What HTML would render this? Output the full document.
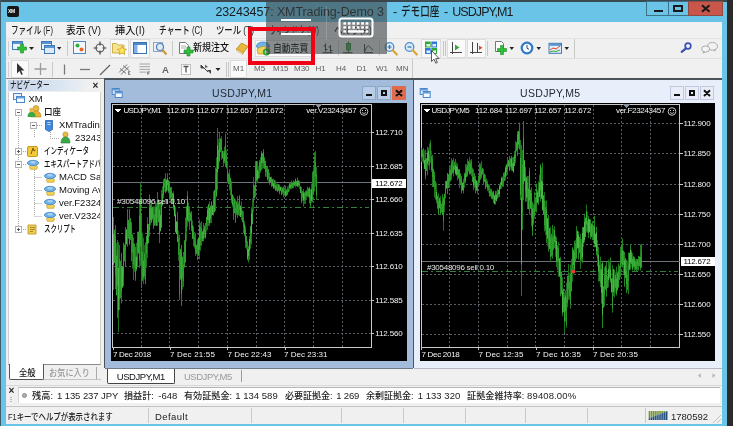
<!DOCTYPE html>
<html lang="ja">
<head>
<meta charset="utf-8">
<title>23243457: XMTrading-Demo 3 - デモ口座 - USDJPY,M1</title>
<style>
html,body{margin:0;padding:0;}
body{will-change:transform;width:733px;height:426px;overflow:hidden;position:relative;background:#69c4e7;font-family:"Liberation Sans","Noto Sans CJK JP",sans-serif;font-size:11px;color:#111;}
.a{position:absolute;}
.t{position:absolute;white-space:nowrap;line-height:1;}
[style*="scaleX"]{font-weight:500;}
#frame{left:0;top:0;width:733px;height:426px;background:#69c4e7;}
#client{left:6px;top:22px;width:716px;height:402px;background:#f0f0f0;}
.tt{top:6px;font-size:12.500px;color:#1b1b1b;}
.mi{top:25px;font-size:10.500px;color:#1a1a1a;}
.wb{top:1px;height:15px;border:1px solid #3d6f85;box-sizing:border-box;}
.nav{font-size:9.500px;color:#111;}
.cw{box-sizing:border-box;}
.pl{font-size:8px;color:#f4f4f4;}
.st{font-size:9.5px;color:#222;top:412px;}
.sep{position:absolute;width:1px;background:#c8c8c8;}

.pd{top:65px;font-size:8px;color:#5e5e5e;}
.tm{top:391px;font-size:9.5px;color:#222;}
</style>
</head>
<body>
<div class="a" id="frame"></div>
<div class="a" style="left:0;top:0;width:733px;height:1.500px;background:#3a4850"></div>
<div class="a" style="left:0;top:0;width:1px;height:426px;background:#3f5a68"></div>
<div class="a" style="left:727px;top:0;width:6px;height:426px;background:#2b2b2b"></div>
<div class="a" id="client"></div>
<!-- title bar -->
<div class="a" style="left:7px;top:6px;width:12px;height:11px;background:#151515;border-radius:2px"></div>
<div class="t" style="left:8px;top:9px;font-size:5px;font-weight:bold;color:#fff;letter-spacing:-0.3px">XM</div>
<div class="t tt" style="letter-spacing:-0.107px;left:215.400px;">23243457: XMTrading-Demo 3</div>
<div class="t tt" style="left:393px;">-</div>
<div class="t tt" style="transform:scaleX(0.7658);transform-origin:0 0;left:400.700px;">デモ口座</div>
<div class="t tt" style="left:444px;">-</div>
<div class="t tt" style="letter-spacing:-0.916px;left:452.200px;">USDJPY,M1</div>
<div class="a wb" style="left:646px;width:23px;"></div>
<div class="a" style="left:654px;top:9.500px;width:9px;height:2.500px;background:#1a1a1a"></div>
<div class="a wb" style="left:668px;width:21px;"></div>
<div class="a" style="left:673px;top:5px;width:10px;height:7px;border:2px solid #1a1a1a;border-top-width:2.500px;box-sizing:border-box"></div>
<div class="a wb" style="left:688px;width:35px;background:#c9564a;border-color:#8f4a42"></div>
<svg class="a" style="left:699px;top:3px" width="14" height="11" viewBox="0 0 14 11"><path d="M3 2.300l7.500 6.500M10.500 2.300l-7.500 6.500" stroke="#1a1a1a" stroke-width="2.100"/></svg>
<!-- menu bar -->
<div class="a" style="left:6px;top:22px;width:716px;height:16px;background:#f1f1f2"></div>
<div class="t mi" style="transform:scaleX(0.7201);transform-origin:0 0;left:11px">ファイル (F)</div>
<div class="t mi" style="transform:scaleX(0.9230);transform-origin:0 0;left:66px">表示 (V)</div>
<div class="t mi" style="transform:scaleX(0.9702);transform-origin:0 0;left:115px">挿入(I)</div>
<div class="t mi" style="transform:scaleX(0.7341);transform-origin:0 0;left:159px">チャート (C)</div>
<div class="t mi" style="transform:scaleX(0.7945);transform-origin:0 0;left:216px">ツール (T)</div>
<div class="t mi" style="transform:scaleX(0.6913);transform-origin:0 0;left:269px">ウィンドウ (W)</div>
<div class="t mi" style="transform:scaleX(0.8247);transform-origin:0 0;left:334px">ヘルプ(H)</div>
<!-- toolbars -->
<div class="a" style="left:6px;top:38px;width:716px;height:1px;background:#e3e3e3"></div>
<div class="a" style="left:6px;top:58px;width:716px;height:1px;background:#e0e0e0"></div>
<div class="a" style="left:6px;top:78px;width:716px;height:1px;background:#8a8a8a"></div>
<!-- pressed button backgrounds -->
<div class="a" style="left:110px;top:39px;width:19px;height:19px;background:#fafafa;border:1px solid #dcdcdc;box-sizing:border-box"></div>
<div class="a" style="left:130px;top:39px;width:20px;height:19px;background:#fafafa;border:1px solid #dcdcdc;box-sizing:border-box"></div>
<div class="a" style="left:421px;top:39px;width:20px;height:19px;background:#fafafa;border:1px solid #dcdcdc;box-sizing:border-box"></div>
<div class="a" style="left:447px;top:39px;width:19px;height:19px;background:#fafafa;border:1px solid #dcdcdc;box-sizing:border-box"></div>
<div class="a" style="left:467px;top:39px;width:19px;height:19px;background:#fafafa;border:1px solid #dcdcdc;box-sizing:border-box"></div>
<div class="a" style="left:11px;top:60px;width:18px;height:18px;background:#fafafa;border:1px solid #dcdcdc;box-sizing:border-box"></div>
<div class="a" style="left:230px;top:60px;width:17px;height:18px;background:#fafafa;border:1px solid #dcdcdc;box-sizing:border-box"></div>
<div class="a" style="left:254.500px;top:40px;width:58px;height:17px;background:#fbfbfb;border:1px solid #dcdcdc;box-sizing:border-box"></div>
<!-- separators -->
<div class="sep" style="left:67px;top:41px;height:15px"></div>
<div class="sep" style="left:172px;top:41px;height:15px"></div>
<div class="sep" style="left:443px;top:41px;height:15px"></div>
<div class="sep" style="left:445px;top:41px;height:15px"></div>
<div class="sep" style="left:487px;top:41px;height:15px"></div>
<div class="sep" style="left:574px;top:39px;height:19px"></div>
<div class="sep" style="left:8px;top:41px;height:15px;background:#d0d0d0"></div>
<div class="sep" style="left:8px;top:62px;height:15px;background:#d0d0d0"></div>
<div class="sep" style="left:52px;top:62px;height:15px"></div>
<div class="sep" style="left:226px;top:62px;height:15px"></div>
<div class="sep" style="left:228px;top:62px;height:15px"></div>
<div class="sep" style="left:412px;top:59px;height:19px"></div>
<!-- toolbar text -->
<div class="t" style="transform:scaleX(0.9000);transform-origin:0 0;left:193.400px;top:43px;font-size:10px;color:#111">新規注文</div>
<div class="t" style="transform:scaleX(0.8800);transform-origin:0 0;left:272.600px;top:43.500px;font-size:10px;color:#111">自動売買</div>
<div class="t" style="left:162px;top:64.500px;font-size:9.500px;font-weight:bold;color:#666">A</div>
<div class="t pd" style="left:233px">M1</div>
<div class="t pd" style="left:254px">M5</div>
<div class="t pd" style="left:273px">M15</div>
<div class="t pd" style="left:294px">M30</div>
<div class="t pd" style="left:315.500px">H1</div>
<div class="t pd" style="left:336px">H4</div>
<div class="t pd" style="left:356.500px">D1</div>
<div class="t pd" style="left:376px">W1</div>
<div class="t pd" style="left:396px">MN</div>
<svg class="a" style="left:0;top:0" width="733" height="426" viewBox="0 0 733 426">
<!-- new chart -->
<rect x="12.5" y="41.5" width="10" height="8" fill="#eaf2fb" stroke="#3f78b8"/>
<rect x="13" y="42" width="9" height="2" fill="#5a93d0"/>
<path d="M17.500 47h3v-3h3v3h3v3h-3v3h-3v-3h-3z" fill="#2fbf3a" stroke="#1d8a27" stroke-width="0.6"/>
<path d="M29 47h5l-2.5 3z" fill="#222"/>
<!-- profiles -->
<rect x="41.500" y="41.500" width="10" height="8" fill="#eaf2fb" stroke="#3f78b8"/>
<rect x="42" y="42" width="9" height="2" fill="#5a93d0"/>
<rect x="44.500" y="45.500" width="10" height="8" fill="#dfeaf8" stroke="#3f78b8"/>
<rect x="45" y="46" width="9" height="2" fill="#5a93d0"/>
<path d="M57 47h4.400l-2.200 2.800z" fill="#222"/>
<!-- market watch -->
<rect x="73.500" y="41.500" width="12" height="12" fill="#f4f8fd" stroke="#4a86c8"/>
<circle cx="77.500" cy="45.500" r="2" fill="#2fae3a"/>
<circle cx="81.500" cy="49.500" r="2" fill="#e8662a"/>
<!-- data window crosshair -->
<circle cx="100" cy="48" r="4" fill="none" stroke="#555" stroke-width="1.200"/>
<path d="M100 41.500v4M100 50.500v4M93.500 48h4M102.500 48h4" stroke="#444" stroke-width="1.200"/>
<!-- navigator folder star -->
<path d="M112.500 43.500h4l1.500 1.500h6v8h-11.500z" fill="#f6e290" stroke="#cdb04a"/>
<path d="M122 46l1.400 2.900 3.100.4-2.300 2.100.6 3.100-2.800-1.500-2.800 1.500.6-3.100-2.300-2.100 3.100-.4z" fill="#ffe45c" stroke="#c59a16" stroke-width="0.700"/>
<!-- terminal -->
<rect x="133.500" y="42.500" width="13" height="11" fill="#fff" stroke="#3b72b5"/>
<rect x="134" y="43" width="12" height="2" fill="#4f88c9"/>
<rect x="134" y="45" width="3.500" height="8" fill="#7fb0e6"/>
<!-- strategy tester -->
<rect x="153.500" y="42.500" width="9" height="9" fill="#e8f0fa" stroke="#8aa6c8"/>
<circle cx="160" cy="47" r="3.500" fill="#dbe9f8" stroke="#5b7fae" stroke-width="1.200"/>
<path d="M162.500 50l4 4.500" stroke="#c9962a" stroke-width="2"/>
<!-- new order -->
<path d="M179.500 42.500h6l3 3v8h-9z" fill="#fff" stroke="#777"/>
<path d="M181 46h5M181 48h5" stroke="#999" stroke-width="0.800"/>
<path d="M184 50h3v-3h3v3h3v3h-3v3h-3v-3h-3z" fill="#2fbf3a" stroke="#1d8a27" stroke-width="0.600"/>
<!-- metaeditor book -->
<path d="M236.500 49l5-6 6.500 3.500-5 6.500z" fill="#e9b83a" stroke="#b58516" stroke-width="0.800"/>
<path d="M236.500 49l6.500 4v1.500l-6.500-4z" fill="#fff3c4" stroke="#b58516" stroke-width="0.500"/>
<!-- autotrading -->
<ellipse cx="263" cy="46" rx="6.500" ry="4" fill="#6fb2e8" stroke="#3a7dbd" stroke-width="0.800"/>
<path d="M257 49q6-5 13 0l-1 5h-11z" fill="#f2d257" stroke="#c49e28" stroke-width="0.800"/>
<circle cx="266.500" cy="52" r="3.300" fill="#35b53f" stroke="#1f8a2a" stroke-width="0.600"/>
<path d="M265.500 50.300l2.600 1.700-2.600 1.700z" fill="#fff"/>
<!-- bar chart / candle / line icons (under overlay) -->
<path d="M325.500 43.500v8M325.500 46h-2M325.500 49.500h2M330.500 45v7M330.500 47h-2M330.500 50.500h2M322.500 52.700h10" stroke="#3a3a3a" stroke-width="1"/>
<path d="M348.500 41.500v11" stroke="#2a7a2a" stroke-width="1"/><rect x="346.500" y="43.500" width="4" height="6.500" fill="#3fb54a" stroke="#1f7a2a" stroke-width="0.800"/>
<path d="M343 52.700h9.500" stroke="#3a3a3a"/>
<path d="M364.500 44v8.700h8.500" stroke="#3a3a3a" fill="none"/><path d="M365 51q2.500-7 4.500-4.500t3.500 3.500" stroke="#3a3a3a" fill="none" stroke-width="0.900"/>
<path d="M338.500 41v15M379.500 41v15" stroke="#d2d2d2" stroke-width="1"/>
<!-- zoom in/out -->
<circle cx="389.500" cy="47" r="4.300" fill="#d8ebfb" stroke="#4a8fd0" stroke-width="1.300"/>
<path d="M387.500 47h4M389.500 45v4" stroke="#2f72b8" stroke-width="1.200"/>
<path d="M392.800 50.300l4 4.200" stroke="#d9a62e" stroke-width="2.200" stroke-linecap="round"/>
<circle cx="409.500" cy="47" r="4.300" fill="#d8ebfb" stroke="#4a8fd0" stroke-width="1.300"/>
<path d="M407.500 47h4" stroke="#2f72b8" stroke-width="1.200"/>
<path d="M412.800 50.300l4 4.200" stroke="#d9a62e" stroke-width="2.200" stroke-linecap="round"/>
<!-- tile -->
<rect x="425" y="41.500" width="5.700" height="6" fill="#2fa83a"/><rect x="426.500" y="44" width="3.500" height="2.500" fill="#eaf7ec"/>
<rect x="431.300" y="41.500" width="5.700" height="6" fill="#2f78e0"/><rect x="432.500" y="44" width="3.500" height="2.500" fill="#e6f0fc"/>
<rect x="425" y="48" width="5.700" height="6" fill="#2f78e0"/><rect x="426.500" y="50.500" width="3.500" height="2.500" fill="#e6f0fc"/>
<rect x="431.300" y="48" width="5.700" height="6" fill="#2fa83a"/><rect x="433" y="50.500" width="3" height="2.500" fill="#eaf7ec"/>
<!-- mouse cursor -->
<path d="M431.500 50.500v11l2.500-2.300 1.800 4 1.600-.7-1.800-3.900h3.400z" fill="#fff" stroke="#333" stroke-width="0.800"/>
<!-- auto scroll -->
<path d="M452.500 42v12M450 52.500h12" stroke="#444" stroke-width="1"/>
<path d="M455 44.500l4.500 3-4.500 3z" fill="#35a83f"/>
<!-- chart shift -->
<path d="M472.500 42v12M470 52.500h12M477.500 43v9" stroke="#444" stroke-width="1"/>
<path d="M479 45.500l3.500 2.200-3.500 2.200z" fill="#d8452e"/>
<!-- indicators -->
<path d="M495.500 41.500h6l2 2v8h-8z" fill="#fff" stroke="#777"/>
<path d="M497.500 48.500h3v-3h3v3h3v3h-3v3h-3v-3h-3z" fill="#2fbf3a" stroke="#1d8a27" stroke-width="0.600"/>
<path d="M509.500 47h4.500l-2.250 3z" fill="#222"/>
<!-- clock -->
<circle cx="527" cy="48" r="5.300" fill="#f4f9ff" stroke="#2f78c8" stroke-width="2.200"/>
<path d="M527 45v3.300l2 1" stroke="#2a4a78" fill="none" stroke-width="1"/>
<path d="M536.500 47h4.500l-2.250 3z" fill="#222"/>
<!-- templates -->
<rect x="549" y="43.300" width="12.500" height="10" fill="#e3eefb" stroke="#3f78b8"/>
<rect x="549.500" y="43.800" width="11.500" height="2" fill="#5a93d0"/>
<path d="M550 50l3-2 3 1 4-3" stroke="#d8452e" fill="none" stroke-width="1"/>
<path d="M550 52l3-1 3 .5 4-1.500" stroke="#35a83f" fill="none" stroke-width="1"/>
<path d="M564.500 47h4.500l-2.250 3z" fill="#222"/>
<!-- search, chat -->
<circle cx="688" cy="46" r="2.800" fill="#f4f6ff" stroke="#3a50b0" stroke-width="1.700"/>
<path d="M686 48.300l-4.300 3.500" stroke="#3a50b0" stroke-width="2.200" stroke-linecap="round"/>
<ellipse cx="712.500" cy="46.300" rx="5" ry="3.900" fill="#f1f1f1" stroke="#a2a2a2" stroke-width="0.900"/>
<path d="M713.500 49.800l1.800 2 .2-2.300z" fill="#a2a2a2"/>
<ellipse cx="705.600" cy="49" rx="4" ry="3.100" fill="#f4f4f4" stroke="#a2a2a2" stroke-width="0.900"/>
<path d="M703.500 51.500l-.8 2.200 2.600-1.500z" fill="#a2a2a2"/>
<!-- toolbar 2 -->
<path d="M17 63v10.500l2.600-2.400 1.700 3.800 1.500-.7-1.700-3.700h3.400z" fill="#333"/>
<path d="M40.500 63v12M34.500 69h12" stroke="#9a9a9a" stroke-width="1.300"/>
<path d="M64.500 64.500v10" stroke="#777" stroke-width="1.300"/>
<path d="M80 69.500h10" stroke="#777" stroke-width="1.300"/>
<path d="M100 75l10-10" stroke="#666" stroke-width="1.200"/>
<path d="M119 72.500l8-8M121 74.500l8-8M120 68.500l6 5M123 65.500l6 5" stroke="#666" stroke-width="0.900"/>
<path d="M128.500 71.500v3h1.800M128.500 73h1.400M128.500 71.500h1.800" stroke="#444" stroke-width="0.600" fill="none"/>
<path d="M139.500 64h10.500M139.500 66.700h10.500M139.500 69.400h10.500M139.500 72.100h7" stroke="#9a9a9a" stroke-width="0.900"/>
<path d="M147.800 71.800v3M147.800 71.800h2M147.800 73.200h1.500" stroke="#444" stroke-width="0.700" fill="none"/>
<rect x="181.500" y="64.500" width="9" height="10" fill="#fdfdfd" stroke="#888" stroke-dasharray="1 1"/>
<path d="M183.500 66.500h5M186 66.500v6" stroke="#555" stroke-width="1.300"/>
<path d="M201 65l3 3-3 0zM204 68l4 4" stroke="#444" fill="#444" stroke-width="1"/>
<path d="M207 70l4 0 0 4z" fill="#444"/><path d="M205 64.500l3 2.500-3 1z" fill="#666"/>
<path d="M215.500 68h5l-2.500 3z" fill="#222"/>
</svg>
<!-- navigator -->
<div class="a" style="left:8px;top:80px;width:81px;height:11px;background:linear-gradient(90deg,#c3d3e8,#dde7f3 70%,#f0f0f0)"></div>
<div class="t" style="transform:scaleX(0.7313);transform-origin:0 0;left:10px;top:81px;font-size:9px;color:#222">ナビゲーター</div>
<div class="t" style="left:92.500px;top:80.500px;font-size:10px;font-weight:bold;color:#222">×</div>
<div class="a" style="left:8px;top:92px;width:93px;height:273px;background:#fff;border:1px solid #d0d0d0;border-top:0;border-bottom-color:#8c8c8c;box-sizing:border-box;overflow:hidden">
  <div class="t nav" style="left:19.5px;top:2px">XM</div>
  <div class="t nav" style="transform:scaleX(0.8940);transform-origin:0 0;left:35px;top:15px">口座</div>
  <div class="t nav" style="left:50px;top:28px">XMTrading-Demo 3</div>
  <div class="t nav" style="left:66px;top:41px">23243457</div>
  <div class="t nav" style="transform:scaleX(0.6834);transform-origin:0 0;left:35px;top:54px">インディケータ</div>
  <div class="t nav" style="transform:scaleX(0.6717);transform-origin:0 0;left:35px;top:67px">エキスパートアドバイザ</div>
  <div class="t nav" style="left:50px;top:80px">MACD Sample</div>
  <div class="t nav" style="left:50px;top:93px">Moving Average</div>
  <div class="t nav" style="left:50px;top:106px">ver.F23243457</div>
  <div class="t nav" style="left:50px;top:119px">ver.V23243457</div>
  <div class="t nav" style="transform:scaleX(0.6735);transform-origin:0 0;left:35px;top:132px">スクリプト</div>
</div>
<svg class="a" style="left:0;top:0" width="110" height="400" viewBox="0 0 110 400">
<!-- tree lines -->
<path d="M18.500 115v114M34.500 128v10M21 151.500h5M21 164.500h5M21 229.500h5M34.500 168v48M34.500 177.500h8M34.500 190.500h8M34.500 203.500h8M34.500 216.500h8M37 125.500h6M50.500 130v8.500h9" stroke="#a8a8a8" stroke-width="1" stroke-dasharray="1 1" fill="none"/>
<g fill="#fff" stroke="#b2b2b2"><rect x="15.500" y="109.500" width="6" height="6"/><rect x="30.500" y="122.500" width="6" height="6"/><rect x="15.500" y="148.500" width="6" height="6"/><rect x="15.500" y="161.500" width="6" height="6"/><rect x="15.500" y="226.500" width="6" height="6"/></g>
<path d="M17 112.500h3M32 125.500h3M17 151.500h3M18.500 150v3M17 164.500h3M17 229.500h3M18.500 228v3" stroke="#5a5a5a"/>
<!-- XM icon -->
<rect x="13.500" y="93.500" width="8" height="6" fill="#eaf2fb" stroke="#4a86c8"/><rect x="16.500" y="96.500" width="8" height="6" fill="#f6faff" stroke="#4a86c8"/><rect x="17" y="97" width="7" height="1.500" fill="#6aa0dc"/>
<!-- accounts icon -->
<circle cx="36" cy="108.500" r="3" fill="#e8b84a" stroke="#b58516" stroke-width="0.600"/><path d="M31 117q0-6 5-6t5 6z" fill="#e8b030" stroke="#b58516" stroke-width="0.600"/>
<circle cx="31.500" cy="110" r="2.300" fill="#e8b84a"/><path d="M27.500 117q0-5 4-5t4 5z" fill="#3aa845"/>
<!-- server icon -->
<path d="M45.500 120.500h7v9l-3.500 2-3.500-2z" fill="#3f8ae0" stroke="#2a62b0" stroke-width="0.800"/><path d="M47.500 122.500h3M47.500 124.500h3" stroke="#d8e8fb" stroke-width="0.800"/>
<!-- account person -->
<circle cx="65.500" cy="134.500" r="2.600" fill="#e8b84a" stroke="#b58516" stroke-width="0.600"/><path d="M61 143q0-6 4.500-6t4.500 6z" fill="#3aa845" stroke="#1f7a2a" stroke-width="0.600"/>
<!-- indicators icon -->
<rect x="27.500" y="146.500" width="10" height="10" rx="1.500" fill="#f3c93a" stroke="#c49a1a"/><path d="M31 154l2-6 1 3 1.500-1" stroke="#6a4a00" fill="none" stroke-width="0.900"/>
<!-- experts icons -->
<g id="ea"><path d="M29.500 166.500q3.500-3.500 8 0l-.8 2.800h-6.400z" fill="#f2d257" stroke="#c49e28" stroke-width="0.700"/><ellipse cx="33" cy="163" rx="5.600" ry="2.700" fill="#6fb2e8" stroke="#3a7dbd" stroke-width="0.700"/><ellipse cx="33" cy="162.300" rx="2.600" ry="1.200" fill="#a8d2f4"/></g>
<use href="#ea" x="17" y="13"/><use href="#ea" x="17" y="26"/><use href="#ea" x="17" y="39"/><use href="#ea" x="17" y="52"/>
<!-- scripts icon -->
<path d="M28 225h8v9h-8z" fill="#f0cf55" stroke="#b8901f" stroke-width="0.800"/><path d="M30 227.500h5M30 229.500h5M30 231.500h3" stroke="#8a6a10" stroke-width="0.700"/>
</svg>
<!-- nav tabs -->
<div class="a" style="left:43px;top:379px;width:58px;height:1px;background:#c4c4c4"></div>
<div class="a" style="left:9px;top:364px;width:34.500px;height:16px;background:#fff;border:1px solid #555;border-top:0;box-sizing:border-box;border-radius:0 0 2px 2px"></div>
<div class="t" style="transform:scaleX(0.9159);transform-origin:0 0;left:19px;top:368.500px;font-size:9px;color:#111;">全般</div>
<div class="t" style="transform:scaleX(0.9108);transform-origin:0 0;left:48.500px;top:368.500px;font-size:9px;color:#999;">お気に入り</div>
<div class="sep" style="left:96px;top:367px;height:12px;background:#aaa"></div>
<!-- MDI workspace -->
<div class="a" style="left:104px;top:78px;width:618px;height:290px;background:#4a525a"></div>
<!-- window 1 (active) -->
<div class="a" style="left:105px;top:80px;width:308px;height:288px;background:#a3bcdc"></div>
<div class="a" style="left:110.500px;top:103px;width:296px;height:258px;background:#000"></div>
<div class="t" style="letter-spacing:0.325px;left:212px;top:88.400px;font-size:10.500px;color:#1e2630">USDJPY,M1</div>
<div class="a" style="left:362px;top:86px;width:14px;height:14px;background:#b9cde6;border:1px solid #8da6c6;box-sizing:border-box"></div>
<div class="a" style="left:366px;top:94px;width:6px;height:2px;background:#111"></div>
<div class="a" style="left:377px;top:86px;width:14px;height:14px;background:#b9cde6;border:1px solid #8da6c6;box-sizing:border-box"></div>
<div class="a" style="left:381px;top:90px;width:6px;height:6px;border:2px solid #111;border-top-width:2px;box-sizing:border-box"></div>
<div class="a" style="left:392px;top:86px;width:14px;height:14px;background:#e06a4c;box-sizing:border-box"></div>

<!-- window 2 (inactive) -->
<div class="a" style="left:414px;top:80px;width:308px;height:288px;background:#e9eefb"></div>
<div class="a" style="left:419.500px;top:103px;width:295.300px;height:258px;background:#000"></div>
<div class="t" style="letter-spacing:0.325px;left:520px;top:88.400px;font-size:10.500px;color:#1e2630">USDJPY,M5</div>
<div class="a" style="left:670px;top:86px;width:14px;height:14px;background:#e9edf9;border:1px solid #c3c9dd;box-sizing:border-box"></div>
<div class="a" style="left:674px;top:94px;width:6px;height:2px;background:#111"></div>
<div class="a" style="left:685px;top:86px;width:14px;height:14px;background:#e9edf9;border:1px solid #c3c9dd;box-sizing:border-box"></div>
<div class="a" style="left:689px;top:90px;width:6px;height:6px;border:2px solid #111;box-sizing:border-box"></div>
<div class="a" style="left:700px;top:86px;width:14px;height:14px;background:#e9edf9;border:1px solid #c3c9dd;box-sizing:border-box"></div>

<!-- window icons -->
<svg class="a" style="left:0;top:0" width="733" height="120" viewBox="0 0 733 120">
<g id="wi" transform="translate(-1.300,0)"><rect x="113.500" y="88.500" width="7" height="6" fill="#dfeaf8" stroke="#4a86c8"/><rect x="114" y="89" width="6" height="1.500" fill="#5f98d8"/><rect x="116.500" y="91.500" width="7" height="6" fill="#f2f7fd" stroke="#4a86c8"/><rect x="117" y="92" width="6" height="1.500" fill="#5f98d8"/></g>
<use href="#wi" x="308" y="0"/>
<path d="M396 90.300l6 5.700M402 90.300l-6 5.700M704 90.300l6 5.700M710 90.300l-6 5.700" stroke="#111" stroke-width="2"/>
</svg>
<svg class="a" style="left:0;top:0" width="733" height="426" viewBox="0 0 733 426" shape-rendering="crispEdges">
<defs><filter id="bl" x="-5%" y="-5%" width="110%" height="110%"><feGaussianBlur stdDeviation="0.55"/></filter></defs>
<path d="M141.5 105V347M169.5 105V347M198.5 105V347M227.5 105V347M256.5 105V347M284.5 105V347M313.5 105V347M342.5 105V347M113 132.5H371M113 166.5H371M113 199.5H371M113 233.5H371M113 266.5H371M113 300.5H371M113 333.5H371" stroke="#565d66" stroke-width="1" stroke-dasharray="2 2" fill="none"/>
<path d="M112.500 104v243H372M112 104.500h259.500V347" stroke="#c8c8c8" fill="none"/>
<path d="M113 182.500h258" stroke="#6c7279"/>
<path d="M113 207.500h256" stroke="#33803d" stroke-dasharray="6 3 2 3"/>
<g filter="url(#bl)" shape-rendering="auto">
<rect x="113" y="217.0" width="1" height="73.0" fill="#1f7d1f"/>
<rect x="115" y="225.0" width="1" height="64.0" fill="#1f7d1f"/>
<rect x="116" y="242.8" width="1" height="44.7" fill="#1a6a1a"/>
<rect x="117" y="240.0" width="1" height="78.0" fill="#1f7d1f"/>
<rect x="118" y="242.0" width="1" height="90.0" fill="#1b721b"/>
<rect x="119" y="245.0" width="1" height="65.0" fill="#1f7d1f"/>
<rect x="121" y="252.9" width="1" height="50.5" fill="#238723"/>
<rect x="123" y="242.5" width="1" height="43.5" fill="#238723"/>
<rect x="125" y="227.2" width="1" height="39.1" fill="#238723"/>
<rect x="127" y="209.2" width="1" height="37.4" fill="#238723"/>
<rect x="129" y="209.1" width="1" height="35.7" fill="#238723"/>
<rect x="131" y="222.2" width="1" height="39.1" fill="#238723"/>
<rect x="132" y="233.8" width="1" height="34.9" fill="#1a6a1a"/>
<rect x="133" y="237.4" width="1" height="42.6" fill="#1f7d1f"/>
<rect x="134" y="249.2" width="1" height="22.6" fill="#175f17"/>
<rect x="135" y="246.9" width="1" height="33.9" fill="#238723"/>
<rect x="136" y="242.8" width="1" height="28.4" fill="#1a6a1a"/>
<rect x="137" y="232.0" width="1" height="34.8" fill="#238723"/>
<rect x="139" y="200.0" width="1" height="68.0" fill="#1b721b"/>
<rect x="140" y="183.0" width="1" height="83.0" fill="#1b721b"/>
<rect x="141" y="215.0" width="1" height="73.0" fill="#238723"/>
<rect x="142" y="232.7" width="1" height="41.4" fill="#1a6a1a"/>
<rect x="143" y="237.7" width="1" height="46.1" fill="#1b721b"/>
<rect x="144" y="245.1" width="1" height="34.3" fill="#175f17"/>
<rect x="145" y="242.4" width="1" height="41.8" fill="#238723"/>
<rect x="146" y="235.5" width="1" height="32.2" fill="#1d741d"/>
<rect x="147" y="217.3" width="1" height="40.9" fill="#1b721b"/>
<rect x="149" y="194.4" width="1" height="41.8" fill="#238723"/>
<rect x="150" y="203.6" width="1" height="21.6" fill="#1d741d"/>
<rect x="151" y="201.2" width="1" height="21.8" fill="#238723"/>
<rect x="152" y="208.8" width="1" height="11.6" fill="#175f17"/>
<rect x="153" y="206.3" width="1" height="22.6" fill="#238723"/>
<rect x="154" y="206.4" width="1" height="19.2" fill="#1a6a1a"/>
<rect x="155" y="201.4" width="1" height="24.4" fill="#1b721b"/>
<rect x="156" y="202.7" width="1" height="16.9" fill="#1a6a1a"/>
<rect x="157" y="191.9" width="1" height="33.9" fill="#1f7d1f"/>
<rect x="159" y="202.3" width="1" height="40.9" fill="#1f7d1f"/>
<rect x="160" y="203.7" width="1" height="26.2" fill="#1d741d"/>
<rect x="161" y="190.1" width="1" height="36.5" fill="#1b721b"/>
<rect x="162" y="186.3" width="1" height="19.3" fill="#1d741d"/>
<rect x="163" y="179.1" width="1" height="19.1" fill="#1f7d1f"/>
<rect x="164" y="179.5" width="1" height="12.3" fill="#175f17"/>
<rect x="165" y="173.2" width="1" height="20.0" fill="#1f7d1f"/>
<rect x="167" y="173.0" width="1" height="17.4" fill="#1b721b"/>
<rect x="168" y="179.8" width="1" height="13.5" fill="#1a6a1a"/>
<rect x="169" y="181.0" width="1" height="17.4" fill="#238723"/>
<rect x="170" y="187.0" width="1" height="11.4" fill="#1a6a1a"/>
<rect x="171" y="186.9" width="1" height="16.5" fill="#238723"/>
<rect x="173" y="191.1" width="1" height="19.1" fill="#1b721b"/>
<rect x="175" y="206.5" width="1" height="26.1" fill="#1b721b"/>
<rect x="177" y="211.8" width="1" height="30.4" fill="#1f7d1f"/>
<rect x="178" y="230.7" width="1" height="30.1" fill="#175f17"/>
<rect x="179" y="235.0" width="1" height="65.0" fill="#1f7d1f"/>
<rect x="181" y="245.0" width="1" height="61.0" fill="#238723"/>
<rect x="182" y="257.8" width="1" height="31.8" fill="#1a6a1a"/>
<rect x="183" y="252.0" width="1" height="34.8" fill="#1f7d1f"/>
<rect x="184" y="240.0" width="1" height="27.4" fill="#1d741d"/>
<rect x="185" y="217.5" width="1" height="43.5" fill="#1f7d1f"/>
<rect x="186" y="214.8" width="1" height="26.5" fill="#1a6a1a"/>
<rect x="187" y="191.1" width="1" height="35.7" fill="#1b721b"/>
<rect x="188" y="202.3" width="1" height="19.9" fill="#1a6a1a"/>
<rect x="189" y="206.3" width="1" height="23.5" fill="#1f7d1f"/>
<rect x="191" y="211.2" width="1" height="20.0" fill="#238723"/>
<rect x="192" y="220.4" width="1" height="15.4" fill="#1a6a1a"/>
<rect x="193" y="226.2" width="1" height="20.0" fill="#1f7d1f"/>
<rect x="194" y="232.0" width="1" height="16.4" fill="#1d741d"/>
<rect x="195" y="233.3" width="1" height="22.6" fill="#238723"/>
<rect x="197" y="239.2" width="1" height="20.9" fill="#238723"/>
<rect x="198" y="237.2" width="1" height="15.0" fill="#175f17"/>
<rect x="199" y="219.3" width="1" height="40.0" fill="#1b721b"/>
<rect x="200" y="222.6" width="1" height="28.2" fill="#1a6a1a"/>
<rect x="201" y="221.4" width="1" height="24.4" fill="#1f7d1f"/>
<rect x="203" y="223.1" width="1" height="18.3" fill="#1f7d1f"/>
<rect x="204" y="225.4" width="1" height="12.9" fill="#1d741d"/>
<rect x="205" y="222.9" width="1" height="15.7" fill="#238723"/>
<rect x="206" y="217.9" width="1" height="13.6" fill="#1a6a1a"/>
<rect x="207" y="206.3" width="1" height="23.5" fill="#1f7d1f"/>
<rect x="208" y="206.9" width="1" height="19.0" fill="#1d741d"/>
<rect x="209" y="201.4" width="1" height="24.4" fill="#1b721b"/>
<rect x="210" y="207.9" width="1" height="15.2" fill="#1d741d"/>
<rect x="211" y="201.2" width="1" height="21.8" fill="#1b721b"/>
<rect x="213" y="191.4" width="1" height="24.4" fill="#1b721b"/>
<rect x="215" y="167.5" width="1" height="43.5" fill="#1f7d1f"/>
<rect x="216" y="157.2" width="1" height="39.2" fill="#1a6a1a"/>
<rect x="217" y="128.0" width="1" height="62.0" fill="#1f7d1f"/>
<rect x="218" y="139.0" width="1" height="26.5" fill="#175f17"/>
<rect x="219" y="131.8" width="1" height="30.4" fill="#1f7d1f"/>
<rect x="221" y="136.3" width="1" height="23.5" fill="#1b721b"/>
<rect x="223" y="150.9" width="1" height="15.7" fill="#1b721b"/>
<rect x="224" y="146.5" width="1" height="17.0" fill="#1d741d"/>
<rect x="225" y="133.9" width="1" height="33.1" fill="#238723"/>
<rect x="226" y="149.9" width="1" height="18.8" fill="#1a6a1a"/>
<rect x="227" y="161.2" width="1" height="21.8" fill="#1f7d1f"/>
<rect x="229" y="169.2" width="1" height="20.9" fill="#1f7d1f"/>
<rect x="230" y="181.1" width="1" height="14.3" fill="#1d741d"/>
<rect x="231" y="181.2" width="1" height="21.8" fill="#1f7d1f"/>
<rect x="232" y="195.0" width="1" height="12.3" fill="#175f17"/>
<rect x="233" y="196.3" width="1" height="23.5" fill="#238723"/>
<rect x="235" y="199.3" width="1" height="23.5" fill="#1f7d1f"/>
<rect x="236" y="201.1" width="1" height="14.2" fill="#1a6a1a"/>
<rect x="237" y="196.2" width="1" height="21.8" fill="#1f7d1f"/>
<rect x="238" y="201.5" width="1" height="13.8" fill="#175f17"/>
<rect x="239" y="195.2" width="1" height="20.9" fill="#238723"/>
<rect x="241" y="201.1" width="1" height="19.1" fill="#1b721b"/>
<rect x="243" y="211.2" width="1" height="21.8" fill="#1b721b"/>
<rect x="244" y="221.3" width="1" height="15.0" fill="#1d741d"/>
<rect x="245" y="226.2" width="1" height="21.8" fill="#1b721b"/>
<rect x="246" y="235.8" width="1" height="13.6" fill="#175f17"/>
<rect x="247" y="241.1" width="1" height="19.1" fill="#238723"/>
<rect x="248" y="245.9" width="1" height="16.5" fill="#1f7d1f"/>
<rect x="249" y="236.3" width="1" height="23.5" fill="#1f7d1f"/>
<rect x="250" y="229.6" width="1" height="19.2" fill="#1d741d"/>
<rect x="251" y="207.2" width="1" height="37.4" fill="#1f7d1f"/>
<rect x="252" y="198.3" width="1" height="23.8" fill="#1a6a1a"/>
<rect x="253" y="177.0" width="1" height="34.8" fill="#1b721b"/>
<rect x="255" y="161.1" width="1" height="35.7" fill="#238723"/>
<rect x="256" y="168.9" width="1" height="14.8" fill="#175f17"/>
<rect x="257" y="161.2" width="1" height="21.8" fill="#1f7d1f"/>
<rect x="258" y="165.6" width="1" height="11.4" fill="#175f17"/>
<rect x="259" y="160.1" width="1" height="18.3" fill="#1f7d1f"/>
<rect x="260" y="157.2" width="1" height="15.6" fill="#1d741d"/>
<rect x="261" y="151.1" width="1" height="19.1" fill="#238723"/>
<rect x="262" y="154.7" width="1" height="14.1" fill="#1d741d"/>
<rect x="263" y="149.1" width="1" height="19.1" fill="#238723"/>
<rect x="264" y="157.0" width="1" height="11.2" fill="#1d741d"/>
<rect x="265" y="160.9" width="1" height="15.7" fill="#238723"/>
<rect x="266" y="165.7" width="1" height="11.2" fill="#175f17"/>
<rect x="267" y="165.8" width="1" height="14.8" fill="#238723"/>
<rect x="268" y="172.7" width="1" height="9.6" fill="#175f17"/>
<rect x="269" y="172.7" width="1" height="12.2" fill="#1f7d1f"/>
<rect x="271" y="176.6" width="1" height="10.4" fill="#1f7d1f"/>
<rect x="273" y="178.6" width="1" height="10.4" fill="#1f7d1f"/>
<rect x="274" y="180.3" width="1" height="8.5" fill="#1d741d"/>
<rect x="275" y="180.6" width="1" height="10.4" fill="#1f7d1f"/>
<rect x="276" y="183.6" width="1" height="7.1" fill="#1d741d"/>
<rect x="277" y="183.5" width="1" height="8.7" fill="#238723"/>
<rect x="278" y="185.4" width="1" height="5.7" fill="#1d741d"/>
<rect x="279" y="184.6" width="1" height="9.6" fill="#238723"/>
<rect x="281" y="186.5" width="1" height="8.7" fill="#1f7d1f"/>
<rect x="282" y="188.9" width="1" height="5.3" fill="#1a6a1a"/>
<rect x="283" y="186.6" width="1" height="10.4" fill="#1f7d1f"/>
<rect x="284" y="187.4" width="1" height="6.9" fill="#1d741d"/>
<rect x="285" y="185.7" width="1" height="11.3" fill="#238723"/>
<rect x="287" y="186.5" width="1" height="8.7" fill="#1f7d1f"/>
<rect x="288" y="185.5" width="1" height="6.6" fill="#175f17"/>
<rect x="289" y="182.5" width="1" height="8.7" fill="#1b721b"/>
<rect x="290" y="182.6" width="1" height="6.6" fill="#1d741d"/>
<rect x="291" y="180.5" width="1" height="8.7" fill="#1f7d1f"/>
<rect x="292" y="182.0" width="1" height="6.3" fill="#175f17"/>
<rect x="293" y="180.4" width="1" height="7.8" fill="#1f7d1f"/>
<rect x="295" y="178.5" width="1" height="8.7" fill="#238723"/>
<rect x="297" y="177.6" width="1" height="9.6" fill="#238723"/>
<rect x="298" y="180.1" width="1" height="6.9" fill="#1a6a1a"/>
<rect x="299" y="180.5" width="1" height="8.7" fill="#1b721b"/>
<rect x="301" y="186.9" width="1" height="16.5" fill="#1f7d1f"/>
<rect x="302" y="192.1" width="1" height="9.1" fill="#175f17"/>
<rect x="303" y="189.0" width="1" height="17.4" fill="#1f7d1f"/>
<rect x="304" y="192.5" width="1" height="11.6" fill="#1d741d"/>
<rect x="305" y="190.8" width="1" height="13.1" fill="#1b721b"/>
<rect x="306" y="189.7" width="1" height="9.9" fill="#175f17"/>
<rect x="307" y="186.6" width="1" height="10.4" fill="#238723"/>
<rect x="308" y="188.2" width="1" height="9.3" fill="#1d741d"/>
<rect x="309" y="186.9" width="1" height="16.5" fill="#238723"/>
<rect x="310" y="189.1" width="1" height="19.1" fill="#1f7d1f"/>
<rect x="311" y="183.5" width="1" height="19.4" fill="#1a6a1a"/>
<rect x="312" y="171.8" width="1" height="30.4" fill="#238723"/>
<rect x="313" y="167.2" width="1" height="21.2" fill="#175f17"/>
<rect x="314" y="152.2" width="1" height="39.2" fill="#1f7d1f"/>
<rect x="315" y="151.1" width="1" height="35.7" fill="#1f7d1f"/>
<rect x="316" y="166.9" width="1" height="33.1" fill="#1b721b"/>
<rect x="113" y="234.1" width="1" height="30.6" fill="#48b848"/>
<rect x="114" y="229.7" width="1" height="33.3" fill="#2f9f2f"/>
<rect x="115" y="235.8" width="1" height="39.7" fill="#2f9f2f"/>
<rect x="116" y="255.6" width="1" height="39.7" fill="#38ab38"/>
<rect x="117" y="249.8" width="1" height="35.7" fill="#2f9f2f"/>
<rect x="118" y="267.8" width="1" height="42.5" fill="#48b848"/>
<rect x="119" y="258.9" width="1" height="40.2" fill="#2f9f2f"/>
<rect x="120" y="260.7" width="1" height="37.7" fill="#2a962a"/>
<rect x="121" y="266.1" width="1" height="24.4" fill="#38ab38"/>
<rect x="122" y="266.6" width="1" height="21.0" fill="#48b848"/>
<rect x="123" y="247.7" width="1" height="28.3" fill="#2f9f2f"/>
<rect x="124" y="244.6" width="1" height="16.8" fill="#2f9f2f"/>
<rect x="125" y="234.5" width="1" height="16.3" fill="#2f9f2f"/>
<rect x="126" y="229.4" width="1" height="15.0" fill="#48b848"/>
<rect x="127" y="220.6" width="1" height="17.9" fill="#2a962a"/>
<rect x="128" y="219.9" width="1" height="18.8" fill="#2f9f2f"/>
<rect x="129" y="222.8" width="1" height="21.1" fill="#2f9f2f"/>
<rect x="130" y="218.2" width="1" height="21.6" fill="#2f9f2f"/>
<rect x="131" y="226.6" width="1" height="25.6" fill="#2a962a"/>
<rect x="132" y="234.9" width="1" height="17.9" fill="#2a962a"/>
<rect x="133" y="243.1" width="1" height="21.1" fill="#2f9f2f"/>
<rect x="134" y="243.7" width="1" height="24.7" fill="#2a962a"/>
<rect x="135" y="257.1" width="1" height="19.9" fill="#2f9f2f"/>
<rect x="136" y="256.6" width="1" height="12.8" fill="#48b848"/>
<rect x="137" y="239.5" width="1" height="12.8" fill="#2f9f2f"/>
<rect x="138" y="231.5" width="1" height="22.1" fill="#38ab38"/>
<rect x="139" y="215.6" width="1" height="45.0" fill="#2f9f2f"/>
<rect x="140" y="200.2" width="1" height="46.2" fill="#2f9f2f"/>
<rect x="141" y="233.5" width="1" height="31.0" fill="#2f9f2f"/>
<rect x="142" y="251.8" width="1" height="29.0" fill="#2f9f2f"/>
<rect x="143" y="260.4" width="1" height="17.3" fill="#38ab38"/>
<rect x="144" y="253.2" width="1" height="22.9" fill="#2f9f2f"/>
<rect x="145" y="258.5" width="1" height="21.8" fill="#2a962a"/>
<rect x="146" y="236.3" width="1" height="17.3" fill="#2f9f2f"/>
<rect x="147" y="224.2" width="1" height="19.8" fill="#48b848"/>
<rect x="148" y="224.0" width="1" height="19.2" fill="#2f9f2f"/>
<rect x="149" y="207.8" width="1" height="22.3" fill="#38ab38"/>
<rect x="150" y="205.6" width="1" height="14.0" fill="#38ab38"/>
<rect x="151" y="208.4" width="1" height="13.2" fill="#38ab38"/>
<rect x="152" y="207.0" width="1" height="11.5" fill="#38ab38"/>
<rect x="153" y="213.8" width="1" height="11.6" fill="#2a962a"/>
<rect x="154" y="214.3" width="1" height="11.2" fill="#2f9f2f"/>
<rect x="155" y="207.3" width="1" height="15.5" fill="#2f9f2f"/>
<rect x="156" y="206.5" width="1" height="19.3" fill="#38ab38"/>
<rect x="157" y="200.6" width="1" height="17.2" fill="#2a962a"/>
<rect x="158" y="199.6" width="1" height="22.5" fill="#2f9f2f"/>
<rect x="159" y="209.7" width="1" height="24.6" fill="#38ab38"/>
<rect x="160" y="215.2" width="1" height="16.1" fill="#48b848"/>
<rect x="161" y="203.2" width="1" height="24.5" fill="#38ab38"/>
<rect x="162" y="193.9" width="1" height="11.2" fill="#38ab38"/>
<rect x="163" y="182.5" width="1" height="12.1" fill="#38ab38"/>
<rect x="164" y="178.4" width="1" height="8.8" fill="#2f9f2f"/>
<rect x="165" y="179.3" width="1" height="13.2" fill="#2a962a"/>
<rect x="166" y="179.6" width="1" height="11.8" fill="#48b848"/>
<rect x="167" y="177.9" width="1" height="7.1" fill="#38ab38"/>
<rect x="168" y="180.8" width="1" height="10.7" fill="#38ab38"/>
<rect x="169" y="183.0" width="1" height="9.9" fill="#2f9f2f"/>
<rect x="170" y="187.6" width="1" height="11.1" fill="#2f9f2f"/>
<rect x="171" y="190.8" width="1" height="6.3" fill="#2f9f2f"/>
<rect x="172" y="192.8" width="1" height="10.9" fill="#2f9f2f"/>
<rect x="173" y="194.1" width="1" height="13.0" fill="#48b848"/>
<rect x="174" y="204.8" width="1" height="11.6" fill="#48b848"/>
<rect x="175" y="214.2" width="1" height="17.5" fill="#48b848"/>
<rect x="176" y="221.3" width="1" height="12.8" fill="#48b848"/>
<rect x="177" y="222.2" width="1" height="19.4" fill="#38ab38"/>
<rect x="178" y="237.7" width="1" height="17.0" fill="#2a962a"/>
<rect x="179" y="252.0" width="1" height="42.7" fill="#2a962a"/>
<rect x="180" y="248.9" width="1" height="30.7" fill="#2f9f2f"/>
<rect x="181" y="253.2" width="1" height="40.7" fill="#38ab38"/>
<rect x="182" y="256.7" width="1" height="21.2" fill="#2f9f2f"/>
<rect x="183" y="264.6" width="1" height="16.6" fill="#2f9f2f"/>
<rect x="184" y="240.9" width="1" height="26.5" fill="#2f9f2f"/>
<rect x="185" y="233.0" width="1" height="29.6" fill="#2f9f2f"/>
<rect x="186" y="206.2" width="1" height="25.0" fill="#2a962a"/>
<rect x="187" y="196.4" width="1" height="23.7" fill="#48b848"/>
<rect x="188" y="206.5" width="1" height="14.9" fill="#2f9f2f"/>
<rect x="189" y="209.8" width="1" height="13.4" fill="#2a962a"/>
<rect x="190" y="212.4" width="1" height="8.5" fill="#2f9f2f"/>
<rect x="191" y="214.3" width="1" height="13.8" fill="#2f9f2f"/>
<rect x="192" y="225.4" width="1" height="13.4" fill="#38ab38"/>
<rect x="193" y="230.4" width="1" height="8.7" fill="#2a962a"/>
<rect x="194" y="237.2" width="1" height="9.1" fill="#2a962a"/>
<rect x="195" y="243.2" width="1" height="8.6" fill="#2f9f2f"/>
<rect x="196" y="244.7" width="1" height="9.3" fill="#2f9f2f"/>
<rect x="197" y="243.8" width="1" height="8.4" fill="#2f9f2f"/>
<rect x="198" y="237.8" width="1" height="17.9" fill="#38ab38"/>
<rect x="199" y="225.6" width="1" height="24.1" fill="#38ab38"/>
<rect x="200" y="226.7" width="1" height="18.3" fill="#2a962a"/>
<rect x="201" y="228.6" width="1" height="9.6" fill="#2f9f2f"/>
<rect x="202" y="231.3" width="1" height="9.8" fill="#38ab38"/>
<rect x="203" y="229.1" width="1" height="9.4" fill="#38ab38"/>
<rect x="204" y="226.3" width="1" height="8.0" fill="#2f9f2f"/>
<rect x="205" y="230.3" width="1" height="6.9" fill="#38ab38"/>
<rect x="206" y="216.8" width="1" height="8.8" fill="#2f9f2f"/>
<rect x="207" y="210.1" width="1" height="9.7" fill="#48b848"/>
<rect x="208" y="204.1" width="1" height="16.2" fill="#38ab38"/>
<rect x="209" y="207.9" width="1" height="15.1" fill="#48b848"/>
<rect x="210" y="205.8" width="1" height="13.1" fill="#38ab38"/>
<rect x="211" y="201.7" width="1" height="14.2" fill="#2f9f2f"/>
<rect x="212" y="205.5" width="1" height="9.5" fill="#48b848"/>
<rect x="213" y="198.5" width="1" height="15.5" fill="#2f9f2f"/>
<rect x="214" y="190.0" width="1" height="22.2" fill="#38ab38"/>
<rect x="215" y="174.4" width="1" height="17.9" fill="#2a962a"/>
<rect x="216" y="168.9" width="1" height="27.7" fill="#38ab38"/>
<rect x="217" y="145.5" width="1" height="26.5" fill="#48b848"/>
<rect x="218" y="150.0" width="1" height="18.9" fill="#2f9f2f"/>
<rect x="219" y="142.2" width="1" height="18.3" fill="#38ab38"/>
<rect x="220" y="138.4" width="1" height="13.9" fill="#2f9f2f"/>
<rect x="221" y="139.4" width="1" height="10.8" fill="#2f9f2f"/>
<rect x="222" y="150.7" width="1" height="7.7" fill="#38ab38"/>
<rect x="223" y="153.3" width="1" height="9.5" fill="#2a962a"/>
<rect x="224" y="151.2" width="1" height="9.7" fill="#38ab38"/>
<rect x="225" y="143.3" width="1" height="19.7" fill="#2a962a"/>
<rect x="226" y="155.0" width="1" height="12.8" fill="#2f9f2f"/>
<rect x="227" y="171.0" width="1" height="10.0" fill="#2f9f2f"/>
<rect x="228" y="173.3" width="1" height="10.9" fill="#2a962a"/>
<rect x="229" y="175.0" width="1" height="8.2" fill="#2f9f2f"/>
<rect x="230" y="177.8" width="1" height="11.3" fill="#2f9f2f"/>
<rect x="231" y="188.4" width="1" height="11.5" fill="#2f9f2f"/>
<rect x="232" y="194.4" width="1" height="10.5" fill="#38ab38"/>
<rect x="233" y="202.3" width="1" height="11.0" fill="#2a962a"/>
<rect x="234" y="198.2" width="1" height="15.0" fill="#2f9f2f"/>
<rect x="235" y="208.3" width="1" height="14.0" fill="#2a962a"/>
<rect x="236" y="202.0" width="1" height="10.9" fill="#2f9f2f"/>
<rect x="237" y="204.6" width="1" height="10.0" fill="#2f9f2f"/>
<rect x="238" y="204.0" width="1" height="10.8" fill="#2a962a"/>
<rect x="239" y="197.1" width="1" height="13.0" fill="#2f9f2f"/>
<rect x="240" y="205.6" width="1" height="11.4" fill="#48b848"/>
<rect x="241" y="207.6" width="1" height="7.5" fill="#2f9f2f"/>
<rect x="242" y="210.5" width="1" height="11.8" fill="#2a962a"/>
<rect x="243" y="217.9" width="1" height="8.9" fill="#2f9f2f"/>
<rect x="244" y="224.4" width="1" height="9.8" fill="#38ab38"/>
<rect x="245" y="229.6" width="1" height="12.7" fill="#2f9f2f"/>
<rect x="246" y="236.2" width="1" height="11.1" fill="#2f9f2f"/>
<rect x="247" y="249.0" width="1" height="9.7" fill="#48b848"/>
<rect x="248" y="249.1" width="1" height="7.0" fill="#48b848"/>
<rect x="249" y="239.3" width="1" height="11.4" fill="#48b848"/>
<rect x="250" y="226.0" width="1" height="16.3" fill="#2f9f2f"/>
<rect x="251" y="213.5" width="1" height="19.8" fill="#48b848"/>
<rect x="252" y="209.8" width="1" height="14.4" fill="#38ab38"/>
<rect x="253" y="184.6" width="1" height="17.8" fill="#2a962a"/>
<rect x="254" y="185.2" width="1" height="13.2" fill="#2f9f2f"/>
<rect x="255" y="166.4" width="1" height="24.2" fill="#2f9f2f"/>
<rect x="256" y="161.0" width="1" height="19.5" fill="#38ab38"/>
<rect x="257" y="170.2" width="1" height="9.1" fill="#48b848"/>
<rect x="258" y="170.5" width="1" height="7.9" fill="#2f9f2f"/>
<rect x="259" y="162.1" width="1" height="8.1" fill="#2f9f2f"/>
<rect x="260" y="161.5" width="1" height="9.5" fill="#2f9f2f"/>
<rect x="261" y="153.0" width="1" height="10.3" fill="#48b848"/>
<rect x="262" y="153.4" width="1" height="8.9" fill="#2f9f2f"/>
<rect x="263" y="151.9" width="1" height="11.0" fill="#38ab38"/>
<rect x="264" y="158.8" width="1" height="10.0" fill="#2f9f2f"/>
<rect x="265" y="161.1" width="1" height="10.2" fill="#2f9f2f"/>
<rect x="266" y="166.0" width="1" height="5.8" fill="#2a962a"/>
<rect x="267" y="170.3" width="1" height="8.7" fill="#38ab38"/>
<rect x="268" y="169.2" width="1" height="9.2" fill="#2a962a"/>
<rect x="269" y="177.5" width="1" height="5.4" fill="#38ab38"/>
<rect x="270" y="177.2" width="1" height="4.6" fill="#48b848"/>
<rect x="271" y="178.6" width="1" height="6.9" fill="#2f9f2f"/>
<rect x="272" y="179.2" width="1" height="7.0" fill="#38ab38"/>
<rect x="273" y="183.3" width="1" height="4.6" fill="#48b848"/>
<rect x="274" y="180.2" width="1" height="6.8" fill="#2f9f2f"/>
<rect x="275" y="185.4" width="1" height="4.9" fill="#38ab38"/>
<rect x="276" y="185.2" width="1" height="4.7" fill="#2a962a"/>
<rect x="277" y="187.7" width="1" height="3.7" fill="#2f9f2f"/>
<rect x="278" y="184.2" width="1" height="6.2" fill="#38ab38"/>
<rect x="279" y="186.1" width="1" height="6.1" fill="#2f9f2f"/>
<rect x="280" y="186.9" width="1" height="3.9" fill="#48b848"/>
<rect x="281" y="190.3" width="1" height="4.1" fill="#2f9f2f"/>
<rect x="282" y="187.5" width="1" height="4.7" fill="#2f9f2f"/>
<rect x="283" y="188.0" width="1" height="4.7" fill="#2f9f2f"/>
<rect x="284" y="191.3" width="1" height="4.2" fill="#2a962a"/>
<rect x="285" y="191.2" width="1" height="4.2" fill="#48b848"/>
<rect x="286" y="189.4" width="1" height="6.7" fill="#2f9f2f"/>
<rect x="287" y="189.8" width="1" height="4.5" fill="#2f9f2f"/>
<rect x="288" y="188.7" width="1" height="3.6" fill="#2f9f2f"/>
<rect x="289" y="184.0" width="1" height="4.0" fill="#38ab38"/>
<rect x="290" y="184.6" width="1" height="3.4" fill="#38ab38"/>
<rect x="291" y="182.7" width="1" height="3.9" fill="#2f9f2f"/>
<rect x="292" y="182.5" width="1" height="5.4" fill="#2f9f2f"/>
<rect x="293" y="182.1" width="1" height="3.4" fill="#2f9f2f"/>
<rect x="294" y="181.6" width="1" height="4.2" fill="#38ab38"/>
<rect x="295" y="179.4" width="1" height="4.9" fill="#38ab38"/>
<rect x="296" y="180.9" width="1" height="5.3" fill="#2f9f2f"/>
<rect x="297" y="181.3" width="1" height="4.4" fill="#48b848"/>
<rect x="298" y="180.9" width="1" height="4.1" fill="#38ab38"/>
<rect x="299" y="182.4" width="1" height="3.7" fill="#2f9f2f"/>
<rect x="300" y="186.4" width="1" height="6.7" fill="#38ab38"/>
<rect x="301" y="191.6" width="1" height="9.6" fill="#2f9f2f"/>
<rect x="302" y="191.0" width="1" height="6.5" fill="#2a962a"/>
<rect x="303" y="192.6" width="1" height="7.5" fill="#48b848"/>
<rect x="304" y="192.6" width="1" height="6.9" fill="#2f9f2f"/>
<rect x="305" y="191.7" width="1" height="7.8" fill="#2a962a"/>
<rect x="306" y="191.3" width="1" height="4.5" fill="#38ab38"/>
<rect x="307" y="190.6" width="1" height="5.2" fill="#2a962a"/>
<rect x="308" y="188.7" width="1" height="7.1" fill="#2f9f2f"/>
<rect x="309" y="188.3" width="1" height="9.6" fill="#38ab38"/>
<rect x="310" y="194.4" width="1" height="11.1" fill="#2f9f2f"/>
<rect x="311" y="189.2" width="1" height="11.6" fill="#48b848"/>
<rect x="312" y="184.2" width="1" height="15.3" fill="#2a962a"/>
<rect x="313" y="170.4" width="1" height="22.9" fill="#2f9f2f"/>
<rect x="314" y="157.2" width="1" height="19.5" fill="#2a962a"/>
<rect x="315" y="161.7" width="1" height="14.6" fill="#2f9f2f"/>
<rect x="316" y="174.3" width="1" height="20.7" fill="#2f9f2f"/>
</g>
<path d="M315 104h7l-3.500 4z" fill="#8a9097"/>
<path d="M371 132.5h3" stroke="#c8c8c8"/>
<path d="M371 166.5h3" stroke="#c8c8c8"/>
<path d="M371 199.5h3" stroke="#c8c8c8"/>
<path d="M371 233.5h3" stroke="#c8c8c8"/>
<path d="M371 266.5h3" stroke="#c8c8c8"/>
<path d="M371 300.5h3" stroke="#c8c8c8"/>
<path d="M371 333.5h3" stroke="#c8c8c8"/>
<path d="M113.5 347v3" stroke="#c8c8c8"/>
<path d="M170.5 347v3" stroke="#c8c8c8"/>
<path d="M227.5 347v3" stroke="#c8c8c8"/>
<path d="M285.5 347v3" stroke="#c8c8c8"/>
<path d="M449.5 105V347M478.5 105V347M507.5 105V347M535.5 105V347M564.5 105V347M593.5 105V347M621.5 105V347M650.5 105V347M422 123.5H679M422 153.5H679M422 184.5H679M422 214.5H679M422 244.5H679M422 274.5H679M422 304.5H679M422 334.5H679" stroke="#565d66" stroke-width="1" stroke-dasharray="2 2" fill="none"/>
<path d="M421.500 104v243H680M421 104.500h258.500V347" stroke="#c8c8c8" fill="none"/>
<path d="M422 261.500h258" stroke="#6c7279"/>
<path d="M422 271.500h256" stroke="#33803d" stroke-dasharray="6 3 2 3"/>
<g filter="url(#bl)" shape-rendering="auto">
<rect x="421" y="147.8" width="1" height="13.9" fill="#1b721b"/>
<rect x="422" y="149.3" width="1" height="12.5" fill="#1a6a1a"/>
<rect x="423" y="147.9" width="1" height="15.7" fill="#1f7d1f"/>
<rect x="424" y="150.4" width="1" height="15.7" fill="#175f17"/>
<rect x="425" y="149.7" width="1" height="29.6" fill="#1f7d1f"/>
<rect x="427" y="146.7" width="1" height="28.7" fill="#1f7d1f"/>
<rect x="428" y="147.6" width="1" height="18.1" fill="#1a6a1a"/>
<rect x="429" y="143.5" width="1" height="26.1" fill="#1b721b"/>
<rect x="430" y="140.3" width="1" height="22.6" fill="#1b721b"/>
<rect x="431" y="150.7" width="1" height="21.2" fill="#175f17"/>
<rect x="432" y="154.8" width="1" height="32.2" fill="#1f7d1f"/>
<rect x="433" y="169.0" width="1" height="17.2" fill="#1a6a1a"/>
<rect x="434" y="171.5" width="1" height="26.1" fill="#1f7d1f"/>
<rect x="435" y="181.4" width="1" height="18.3" fill="#1d741d"/>
<rect x="436" y="183.2" width="1" height="20.0" fill="#1b721b"/>
<rect x="438" y="193.2" width="1" height="21.8" fill="#1b721b"/>
<rect x="440" y="196.1" width="1" height="19.1" fill="#1b721b"/>
<rect x="442" y="194.2" width="1" height="20.9" fill="#238723"/>
<rect x="443" y="196.9" width="1" height="33.9" fill="#1b721b"/>
<rect x="444" y="193.4" width="1" height="18.7" fill="#1a6a1a"/>
<rect x="445" y="181.0" width="1" height="17.4" fill="#238723"/>
<rect x="447" y="173.2" width="1" height="20.9" fill="#238723"/>
<rect x="449" y="166.2" width="1" height="21.8" fill="#1b721b"/>
<rect x="450" y="165.4" width="1" height="16.3" fill="#1a6a1a"/>
<rect x="451" y="158.2" width="1" height="21.8" fill="#1f7d1f"/>
<rect x="452" y="160.7" width="1" height="12.5" fill="#1d741d"/>
<rect x="453" y="158.1" width="1" height="18.3" fill="#1b721b"/>
<rect x="455" y="158.9" width="1" height="15.7" fill="#1f7d1f"/>
<rect x="456" y="162.4" width="1" height="13.5" fill="#1a6a1a"/>
<rect x="457" y="163.9" width="1" height="16.5" fill="#1b721b"/>
<rect x="459" y="169.1" width="1" height="19.1" fill="#1f7d1f"/>
<rect x="461" y="176.0" width="1" height="17.4" fill="#238723"/>
<rect x="463" y="178.8" width="1" height="14.8" fill="#1b721b"/>
<rect x="464" y="172.7" width="1" height="15.3" fill="#1a6a1a"/>
<rect x="465" y="164.1" width="1" height="19.1" fill="#1f7d1f"/>
<rect x="466" y="164.3" width="1" height="12.9" fill="#1d741d"/>
<rect x="467" y="159.0" width="1" height="17.4" fill="#1f7d1f"/>
<rect x="468" y="162.6" width="1" height="9.3" fill="#1d741d"/>
<rect x="469" y="157.0" width="1" height="17.4" fill="#1b721b"/>
<rect x="470" y="159.9" width="1" height="14.7" fill="#1a6a1a"/>
<rect x="471" y="159.0" width="1" height="17.4" fill="#1b721b"/>
<rect x="472" y="167.6" width="1" height="13.2" fill="#1d741d"/>
<rect x="473" y="169.2" width="1" height="20.9" fill="#1f7d1f"/>
<rect x="474" y="174.7" width="1" height="13.3" fill="#1a6a1a"/>
<rect x="475" y="176.0" width="1" height="17.4" fill="#238723"/>
<rect x="477" y="180.8" width="1" height="13.1" fill="#1b721b"/>
<rect x="479" y="163.2" width="1" height="20.0" fill="#238723"/>
<rect x="480" y="163.3" width="1" height="16.6" fill="#1d741d"/>
<rect x="481" y="161.0" width="1" height="17.4" fill="#1b721b"/>
<rect x="483" y="168.9" width="1" height="15.7" fill="#1f7d1f"/>
<rect x="485" y="174.8" width="1" height="13.9" fill="#1b721b"/>
<rect x="486" y="178.5" width="1" height="8.4" fill="#1d741d"/>
<rect x="487" y="180.6" width="1" height="10.4" fill="#1f7d1f"/>
<rect x="488" y="184.0" width="1" height="8.8" fill="#175f17"/>
<rect x="489" y="184.7" width="1" height="12.2" fill="#1b721b"/>
<rect x="490" y="188.4" width="1" height="8.2" fill="#1a6a1a"/>
<rect x="491" y="188.6" width="1" height="10.4" fill="#1f7d1f"/>
<rect x="492" y="191.4" width="1" height="7.9" fill="#175f17"/>
<rect x="493" y="190.7" width="1" height="12.2" fill="#238723"/>
<rect x="495" y="190.8" width="1" height="13.9" fill="#1f7d1f"/>
<rect x="496" y="190.9" width="1" height="8.1" fill="#1a6a1a"/>
<rect x="497" y="188.6" width="1" height="10.4" fill="#1b721b"/>
<rect x="498" y="189.6" width="1" height="7.9" fill="#1d741d"/>
<rect x="499" y="184.7" width="1" height="12.2" fill="#238723"/>
<rect x="501" y="176.7" width="1" height="12.2" fill="#1b721b"/>
<rect x="502" y="176.5" width="1" height="10.6" fill="#175f17"/>
<rect x="503" y="172.8" width="1" height="13.9" fill="#238723"/>
<rect x="504" y="171.7" width="1" height="8.8" fill="#1a6a1a"/>
<rect x="505" y="165.8" width="1" height="14.8" fill="#1b721b"/>
<rect x="506" y="164.1" width="1" height="12.0" fill="#1d741d"/>
<rect x="507" y="158.9" width="1" height="15.7" fill="#1f7d1f"/>
<rect x="509" y="155.8" width="1" height="14.8" fill="#238723"/>
<rect x="510" y="159.8" width="1" height="9.5" fill="#175f17"/>
<rect x="511" y="155.8" width="1" height="14.8" fill="#238723"/>
<rect x="512" y="157.3" width="1" height="13.0" fill="#1d741d"/>
<rect x="513" y="156.9" width="1" height="15.7" fill="#238723"/>
<rect x="514" y="151.1" width="1" height="13.1" fill="#1d741d"/>
<rect x="515" y="141.2" width="1" height="21.8" fill="#1b721b"/>
<rect x="517" y="131.4" width="1" height="24.4" fill="#238723"/>
<rect x="518" y="131.1" width="1" height="17.2" fill="#175f17"/>
<rect x="519" y="122.5" width="1" height="27.0" fill="#238723"/>
<rect x="520" y="140.0" width="1" height="60.0" fill="#1f7d1f"/>
<rect x="521" y="145.0" width="1" height="151.0" fill="#1f7d1f"/>
<rect x="522" y="150.0" width="1" height="80.0" fill="#1f7d1f"/>
<rect x="523" y="121.0" width="1" height="79.0" fill="#238723"/>
<rect x="525" y="167.0" width="1" height="34.8" fill="#1f7d1f"/>
<rect x="526" y="176.7" width="1" height="24.7" fill="#1d741d"/>
<rect x="527" y="175.9" width="1" height="33.1" fill="#1f7d1f"/>
<rect x="528" y="176.1" width="1" height="27.4" fill="#175f17"/>
<rect x="529" y="167.7" width="1" height="47.0" fill="#1f7d1f"/>
<rect x="531" y="187.2" width="1" height="39.2" fill="#1b721b"/>
<rect x="532" y="201.9" width="1" height="33.9" fill="#238723"/>
<rect x="533" y="204.0" width="1" height="20.9" fill="#1d741d"/>
<rect x="534" y="191.6" width="1" height="27.0" fill="#1b721b"/>
<rect x="536" y="183.7" width="1" height="28.7" fill="#238723"/>
<rect x="537" y="189.6" width="1" height="13.3" fill="#1a6a1a"/>
<rect x="538" y="181.3" width="1" height="23.5" fill="#1f7d1f"/>
<rect x="539" y="174.6" width="1" height="21.3" fill="#1d741d"/>
<rect x="540" y="164.2" width="1" height="37.4" fill="#1f7d1f"/>
<rect x="541" y="167.4" width="1" height="28.8" fill="#1d741d"/>
<rect x="542" y="162.8" width="1" height="47.8" fill="#1f7d1f"/>
<rect x="544" y="192.2" width="1" height="39.2" fill="#1b721b"/>
<rect x="545" y="200.9" width="1" height="34.1" fill="#175f17"/>
<rect x="546" y="200.4" width="1" height="42.6" fill="#1f7d1f"/>
<rect x="547" y="217.9" width="1" height="28.5" fill="#175f17"/>
<rect x="548" y="215.1" width="1" height="36.5" fill="#238723"/>
<rect x="550" y="227.0" width="1" height="34.8" fill="#1b721b"/>
<rect x="552" y="224.9" width="1" height="33.9" fill="#1f7d1f"/>
<rect x="553" y="228.6" width="1" height="21.6" fill="#1a6a1a"/>
<rect x="554" y="226.2" width="1" height="21.8" fill="#1b721b"/>
<rect x="555" y="234.5" width="1" height="22.2" fill="#175f17"/>
<rect x="556" y="236.8" width="1" height="30.4" fill="#1b721b"/>
<rect x="557" y="244.9" width="1" height="25.4" fill="#1a6a1a"/>
<rect x="558" y="242.0" width="1" height="34.8" fill="#1b721b"/>
<rect x="560" y="257.2" width="1" height="39.1" fill="#238723"/>
<rect x="562" y="277.2" width="1" height="39.1" fill="#1b721b"/>
<rect x="564" y="292.4" width="1" height="40.9" fill="#1b721b"/>
<rect x="565" y="290.3" width="1" height="31.6" fill="#1d741d"/>
<rect x="566" y="282.6" width="1" height="45.2" fill="#1b721b"/>
<rect x="567" y="275.8" width="1" height="31.7" fill="#1d741d"/>
<rect x="568" y="264.1" width="1" height="35.7" fill="#1b721b"/>
<rect x="569" y="273.0" width="1" height="26.7" fill="#1a6a1a"/>
<rect x="570" y="264.6" width="1" height="44.4" fill="#1b721b"/>
<rect x="571" y="258.8" width="1" height="31.3" fill="#1a6a1a"/>
<rect x="572" y="247.0" width="1" height="34.8" fill="#1b721b"/>
<rect x="573" y="249.4" width="1" height="24.7" fill="#1d741d"/>
<rect x="574" y="240.8" width="1" height="31.3" fill="#238723"/>
<rect x="575" y="239.9" width="1" height="19.7" fill="#175f17"/>
<rect x="576" y="225.9" width="1" height="33.1" fill="#1f7d1f"/>
<rect x="578" y="231.6" width="1" height="27.8" fill="#238723"/>
<rect x="580" y="234.0" width="1" height="34.8" fill="#1b721b"/>
<rect x="581" y="239.0" width="1" height="23.0" fill="#1d741d"/>
<rect x="582" y="227.1" width="1" height="35.7" fill="#238723"/>
<rect x="583" y="226.8" width="1" height="20.2" fill="#1d741d"/>
<rect x="584" y="213.7" width="1" height="28.7" fill="#1f7d1f"/>
<rect x="586" y="204.6" width="1" height="27.8" fill="#1b721b"/>
<rect x="587" y="211.9" width="1" height="21.3" fill="#175f17"/>
<rect x="588" y="216.2" width="1" height="21.8" fill="#1f7d1f"/>
<rect x="590" y="219.2" width="1" height="20.0" fill="#238723"/>
<rect x="591" y="223.0" width="1" height="12.7" fill="#1d741d"/>
<rect x="592" y="221.1" width="1" height="19.1" fill="#1f7d1f"/>
<rect x="594" y="215.8" width="1" height="31.3" fill="#238723"/>
<rect x="596" y="226.7" width="1" height="28.7" fill="#238723"/>
<rect x="597" y="240.1" width="1" height="26.2" fill="#1a6a1a"/>
<rect x="598" y="247.0" width="1" height="34.8" fill="#1b721b"/>
<rect x="599" y="260.7" width="1" height="19.4" fill="#1a6a1a"/>
<rect x="600" y="256.8" width="1" height="30.4" fill="#1f7d1f"/>
<rect x="601" y="263.8" width="1" height="39.9" fill="#1d741d"/>
<rect x="602" y="262.0" width="1" height="66.0" fill="#238723"/>
<rect x="604" y="267.2" width="1" height="39.1" fill="#1f7d1f"/>
<rect x="606" y="262.0" width="1" height="34.8" fill="#1f7d1f"/>
<rect x="608" y="259.6" width="1" height="27.8" fill="#1b721b"/>
<rect x="609" y="261.0" width="1" height="17.5" fill="#1d741d"/>
<rect x="610" y="257.4" width="1" height="25.2" fill="#238723"/>
<rect x="612" y="264.8" width="1" height="47.9" fill="#1b721b"/>
<rect x="613" y="275.9" width="1" height="20.1" fill="#1d741d"/>
<rect x="614" y="269.6" width="1" height="27.8" fill="#1b721b"/>
<rect x="615" y="272.2" width="1" height="21.1" fill="#175f17"/>
<rect x="616" y="266.6" width="1" height="28.7" fill="#1f7d1f"/>
<rect x="617" y="271.6" width="1" height="18.8" fill="#1d741d"/>
<rect x="618" y="263.4" width="1" height="24.4" fill="#1f7d1f"/>
<rect x="620" y="246.8" width="1" height="30.4" fill="#1f7d1f"/>
<rect x="621" y="244.8" width="1" height="22.0" fill="#1d741d"/>
<rect x="622" y="238.7" width="1" height="28.7" fill="#238723"/>
<rect x="623" y="253.3" width="1" height="20.6" fill="#1a6a1a"/>
<rect x="624" y="252.0" width="1" height="34.8" fill="#238723"/>
<rect x="626" y="259.9" width="1" height="33.1" fill="#238723"/>
<rect x="627" y="260.5" width="1" height="30.1" fill="#1a6a1a"/>
<rect x="628" y="252.4" width="1" height="41.8" fill="#1f7d1f"/>
<rect x="630" y="244.4" width="1" height="25.2" fill="#1f7d1f"/>
<rect x="631" y="250.1" width="1" height="17.4" fill="#175f17"/>
<rect x="632" y="253.0" width="1" height="17.4" fill="#1b721b"/>
<rect x="633" y="256.2" width="1" height="12.2" fill="#175f17"/>
<rect x="634" y="256.9" width="1" height="14.8" fill="#1b721b"/>
<rect x="635" y="258.8" width="1" height="10.2" fill="#175f17"/>
<rect x="636" y="258.8" width="1" height="13.1" fill="#238723"/>
<rect x="637" y="260.5" width="1" height="9.9" fill="#1d741d"/>
<rect x="638" y="255.8" width="1" height="14.8" fill="#238723"/>
<rect x="640" y="244.5" width="1" height="26.1" fill="#1f7d1f"/>
<rect x="641" y="244.3" width="1" height="23.5" fill="#238723"/>
<rect x="421" y="148.3" width="1" height="9.3" fill="#48b848"/>
<rect x="422" y="150.7" width="1" height="6.0" fill="#2f9f2f"/>
<rect x="423" y="153.8" width="1" height="7.3" fill="#2f9f2f"/>
<rect x="424" y="160.0" width="1" height="8.9" fill="#48b848"/>
<rect x="425" y="158.6" width="1" height="17.0" fill="#38ab38"/>
<rect x="426" y="158.3" width="1" height="12.6" fill="#2f9f2f"/>
<rect x="427" y="152.7" width="1" height="10.9" fill="#48b848"/>
<rect x="428" y="150.6" width="1" height="10.4" fill="#48b848"/>
<rect x="429" y="155.3" width="1" height="9.9" fill="#2a962a"/>
<rect x="430" y="143.0" width="1" height="11.6" fill="#2a962a"/>
<rect x="431" y="156.2" width="1" height="14.0" fill="#2f9f2f"/>
<rect x="432" y="158.6" width="1" height="18.3" fill="#2f9f2f"/>
<rect x="433" y="168.7" width="1" height="18.3" fill="#2f9f2f"/>
<rect x="434" y="174.9" width="1" height="12.6" fill="#2a962a"/>
<rect x="435" y="181.1" width="1" height="9.4" fill="#2a962a"/>
<rect x="436" y="191.6" width="1" height="7.9" fill="#48b848"/>
<rect x="437" y="195.6" width="1" height="13.0" fill="#2f9f2f"/>
<rect x="438" y="200.8" width="1" height="13.1" fill="#2f9f2f"/>
<rect x="439" y="197.6" width="1" height="10.8" fill="#38ab38"/>
<rect x="440" y="200.9" width="1" height="12.8" fill="#2f9f2f"/>
<rect x="441" y="203.5" width="1" height="9.0" fill="#2a962a"/>
<rect x="442" y="201.2" width="1" height="13.8" fill="#2f9f2f"/>
<rect x="443" y="198.5" width="1" height="23.0" fill="#2f9f2f"/>
<rect x="444" y="194.0" width="1" height="11.1" fill="#2f9f2f"/>
<rect x="445" y="182.7" width="1" height="10.2" fill="#2f9f2f"/>
<rect x="446" y="180.8" width="1" height="7.7" fill="#48b848"/>
<rect x="447" y="173.4" width="1" height="14.2" fill="#2f9f2f"/>
<rect x="448" y="174.2" width="1" height="13.9" fill="#2f9f2f"/>
<rect x="449" y="169.3" width="1" height="12.4" fill="#2f9f2f"/>
<rect x="450" y="170.1" width="1" height="10.5" fill="#2f9f2f"/>
<rect x="451" y="162.9" width="1" height="12.3" fill="#2f9f2f"/>
<rect x="452" y="160.3" width="1" height="13.3" fill="#2a962a"/>
<rect x="453" y="165.6" width="1" height="6.9" fill="#38ab38"/>
<rect x="454" y="161.7" width="1" height="8.5" fill="#2a962a"/>
<rect x="455" y="165.2" width="1" height="8.2" fill="#48b848"/>
<rect x="456" y="166.3" width="1" height="8.6" fill="#48b848"/>
<rect x="457" y="167.0" width="1" height="7.7" fill="#38ab38"/>
<rect x="458" y="169.2" width="1" height="9.3" fill="#38ab38"/>
<rect x="459" y="169.9" width="1" height="11.4" fill="#2f9f2f"/>
<rect x="460" y="173.4" width="1" height="11.8" fill="#2a962a"/>
<rect x="461" y="178.5" width="1" height="11.8" fill="#2f9f2f"/>
<rect x="462" y="182.7" width="1" height="7.7" fill="#48b848"/>
<rect x="463" y="181.7" width="1" height="8.9" fill="#38ab38"/>
<rect x="464" y="174.4" width="1" height="7.5" fill="#2f9f2f"/>
<rect x="465" y="173.3" width="1" height="7.1" fill="#48b848"/>
<rect x="466" y="167.2" width="1" height="9.7" fill="#2f9f2f"/>
<rect x="467" y="165.4" width="1" height="9.2" fill="#2f9f2f"/>
<rect x="468" y="161.0" width="1" height="9.4" fill="#2f9f2f"/>
<rect x="469" y="162.5" width="1" height="11.5" fill="#2f9f2f"/>
<rect x="470" y="163.5" width="1" height="10.0" fill="#2f9f2f"/>
<rect x="471" y="161.2" width="1" height="11.6" fill="#2a962a"/>
<rect x="472" y="169.0" width="1" height="13.0" fill="#2a962a"/>
<rect x="473" y="177.0" width="1" height="8.3" fill="#48b848"/>
<rect x="474" y="173.3" width="1" height="11.6" fill="#2a962a"/>
<rect x="475" y="178.9" width="1" height="8.2" fill="#38ab38"/>
<rect x="476" y="180.5" width="1" height="10.1" fill="#48b848"/>
<rect x="477" y="183.5" width="1" height="7.7" fill="#2f9f2f"/>
<rect x="478" y="175.6" width="1" height="9.1" fill="#2a962a"/>
<rect x="479" y="169.9" width="1" height="11.4" fill="#2f9f2f"/>
<rect x="480" y="166.0" width="1" height="12.5" fill="#2a962a"/>
<rect x="481" y="169.8" width="1" height="6.6" fill="#2f9f2f"/>
<rect x="482" y="168.1" width="1" height="6.3" fill="#2f9f2f"/>
<rect x="483" y="173.3" width="1" height="10.1" fill="#2a962a"/>
<rect x="484" y="173.9" width="1" height="8.0" fill="#2f9f2f"/>
<rect x="485" y="179.3" width="1" height="9.4" fill="#2f9f2f"/>
<rect x="486" y="180.5" width="1" height="4.8" fill="#2a962a"/>
<rect x="487" y="183.8" width="1" height="4.2" fill="#38ab38"/>
<rect x="488" y="185.5" width="1" height="4.3" fill="#2a962a"/>
<rect x="489" y="189.6" width="1" height="6.5" fill="#2a962a"/>
<rect x="490" y="190.3" width="1" height="5.4" fill="#2f9f2f"/>
<rect x="491" y="191.0" width="1" height="6.2" fill="#2f9f2f"/>
<rect x="492" y="192.3" width="1" height="6.9" fill="#2f9f2f"/>
<rect x="493" y="192.4" width="1" height="4.9" fill="#38ab38"/>
<rect x="494" y="195.3" width="1" height="8.8" fill="#48b848"/>
<rect x="495" y="193.6" width="1" height="6.4" fill="#38ab38"/>
<rect x="496" y="194.8" width="1" height="6.4" fill="#48b848"/>
<rect x="497" y="192.6" width="1" height="4.9" fill="#2f9f2f"/>
<rect x="498" y="190.0" width="1" height="4.3" fill="#38ab38"/>
<rect x="499" y="186.1" width="1" height="8.0" fill="#48b848"/>
<rect x="500" y="182.1" width="1" height="7.0" fill="#2f9f2f"/>
<rect x="501" y="177.6" width="1" height="7.4" fill="#48b848"/>
<rect x="502" y="178.4" width="1" height="7.6" fill="#2a962a"/>
<rect x="503" y="174.2" width="1" height="8.2" fill="#2a962a"/>
<rect x="504" y="173.4" width="1" height="7.6" fill="#2a962a"/>
<rect x="505" y="167.7" width="1" height="9.4" fill="#48b848"/>
<rect x="506" y="164.7" width="1" height="7.3" fill="#38ab38"/>
<rect x="507" y="162.5" width="1" height="7.1" fill="#2f9f2f"/>
<rect x="508" y="160.1" width="1" height="6.6" fill="#38ab38"/>
<rect x="509" y="161.7" width="1" height="8.9" fill="#2f9f2f"/>
<rect x="510" y="158.4" width="1" height="7.6" fill="#2f9f2f"/>
<rect x="511" y="158.6" width="1" height="8.7" fill="#48b848"/>
<rect x="512" y="163.2" width="1" height="7.6" fill="#38ab38"/>
<rect x="513" y="162.7" width="1" height="9.3" fill="#48b848"/>
<rect x="514" y="154.9" width="1" height="11.1" fill="#38ab38"/>
<rect x="515" y="149.5" width="1" height="8.9" fill="#2f9f2f"/>
<rect x="516" y="142.1" width="1" height="9.2" fill="#2f9f2f"/>
<rect x="517" y="134.4" width="1" height="14.6" fill="#38ab38"/>
<rect x="518" y="131.0" width="1" height="13.7" fill="#38ab38"/>
<rect x="519" y="132.1" width="1" height="16.7" fill="#2f9f2f"/>
<rect x="520" y="157.9" width="1" height="37.0" fill="#38ab38"/>
<rect x="521" y="197.7" width="1" height="66.5" fill="#48b848"/>
<rect x="522" y="164.7" width="1" height="48.4" fill="#2a962a"/>
<rect x="523" y="138.0" width="1" height="46.0" fill="#38ab38"/>
<rect x="524" y="160.2" width="1" height="21.1" fill="#48b848"/>
<rect x="525" y="175.3" width="1" height="15.6" fill="#2f9f2f"/>
<rect x="526" y="177.8" width="1" height="19.8" fill="#48b848"/>
<rect x="527" y="182.4" width="1" height="15.4" fill="#2f9f2f"/>
<rect x="528" y="188.6" width="1" height="20.7" fill="#38ab38"/>
<rect x="529" y="170.8" width="1" height="29.5" fill="#38ab38"/>
<rect x="530" y="189.8" width="1" height="19.0" fill="#38ab38"/>
<rect x="531" y="193.0" width="1" height="24.9" fill="#2f9f2f"/>
<rect x="532" y="208.7" width="1" height="20.8" fill="#38ab38"/>
<rect x="533" y="208.2" width="1" height="14.9" fill="#2a962a"/>
<rect x="534" y="204.5" width="1" height="11.5" fill="#2f9f2f"/>
<rect x="535" y="198.4" width="1" height="13.4" fill="#2a962a"/>
<rect x="536" y="189.3" width="1" height="14.5" fill="#2f9f2f"/>
<rect x="537" y="192.4" width="1" height="10.3" fill="#48b848"/>
<rect x="538" y="190.7" width="1" height="12.7" fill="#2a962a"/>
<rect x="539" y="183.0" width="1" height="14.1" fill="#48b848"/>
<rect x="540" y="166.0" width="1" height="24.0" fill="#38ab38"/>
<rect x="541" y="180.8" width="1" height="18.0" fill="#48b848"/>
<rect x="542" y="182.0" width="1" height="27.9" fill="#48b848"/>
<rect x="543" y="195.2" width="1" height="18.8" fill="#38ab38"/>
<rect x="544" y="200.5" width="1" height="25.0" fill="#2f9f2f"/>
<rect x="545" y="207.1" width="1" height="22.4" fill="#2f9f2f"/>
<rect x="546" y="209.3" width="1" height="25.3" fill="#38ab38"/>
<rect x="547" y="218.0" width="1" height="20.5" fill="#48b848"/>
<rect x="548" y="222.3" width="1" height="23.3" fill="#2a962a"/>
<rect x="549" y="228.1" width="1" height="20.9" fill="#38ab38"/>
<rect x="550" y="236.7" width="1" height="20.0" fill="#2f9f2f"/>
<rect x="551" y="233.7" width="1" height="22.9" fill="#2a962a"/>
<rect x="552" y="237.3" width="1" height="18.1" fill="#2f9f2f"/>
<rect x="553" y="236.0" width="1" height="13.3" fill="#2a962a"/>
<rect x="554" y="230.3" width="1" height="11.9" fill="#38ab38"/>
<rect x="555" y="236.9" width="1" height="12.1" fill="#2f9f2f"/>
<rect x="556" y="241.0" width="1" height="20.8" fill="#48b848"/>
<rect x="557" y="246.7" width="1" height="15.3" fill="#2a962a"/>
<rect x="558" y="248.3" width="1" height="13.8" fill="#2f9f2f"/>
<rect x="559" y="258.2" width="1" height="18.4" fill="#48b848"/>
<rect x="560" y="263.1" width="1" height="15.8" fill="#2f9f2f"/>
<rect x="561" y="272.0" width="1" height="22.1" fill="#2f9f2f"/>
<rect x="562" y="290.6" width="1" height="22.1" fill="#48b848"/>
<rect x="563" y="288.5" width="1" height="23.6" fill="#2f9f2f"/>
<rect x="564" y="297.5" width="1" height="23.4" fill="#38ab38"/>
<rect x="565" y="295.4" width="1" height="16.0" fill="#38ab38"/>
<rect x="566" y="297.3" width="1" height="27.0" fill="#2a962a"/>
<rect x="567" y="276.0" width="1" height="27.0" fill="#2f9f2f"/>
<rect x="568" y="275.7" width="1" height="13.6" fill="#2f9f2f"/>
<rect x="569" y="281.6" width="1" height="14.9" fill="#2f9f2f"/>
<rect x="570" y="273.9" width="1" height="30.3" fill="#2f9f2f"/>
<rect x="571" y="268.9" width="1" height="22.5" fill="#2f9f2f"/>
<rect x="572" y="248.5" width="1" height="20.3" fill="#2f9f2f"/>
<rect x="573" y="250.2" width="1" height="14.7" fill="#38ab38"/>
<rect x="574" y="252.2" width="1" height="19.3" fill="#38ab38"/>
<rect x="575" y="243.3" width="1" height="18.8" fill="#2a962a"/>
<rect x="576" y="238.1" width="1" height="19.8" fill="#2f9f2f"/>
<rect x="577" y="230.6" width="1" height="17.9" fill="#48b848"/>
<rect x="578" y="235.2" width="1" height="13.0" fill="#48b848"/>
<rect x="579" y="236.9" width="1" height="16.4" fill="#2f9f2f"/>
<rect x="580" y="239.2" width="1" height="21.0" fill="#2f9f2f"/>
<rect x="581" y="243.6" width="1" height="14.8" fill="#2f9f2f"/>
<rect x="582" y="233.2" width="1" height="24.0" fill="#48b848"/>
<rect x="583" y="227.4" width="1" height="15.3" fill="#48b848"/>
<rect x="584" y="221.8" width="1" height="18.2" fill="#48b848"/>
<rect x="585" y="217.6" width="1" height="19.3" fill="#38ab38"/>
<rect x="586" y="210.9" width="1" height="13.6" fill="#38ab38"/>
<rect x="587" y="220.9" width="1" height="10.4" fill="#2f9f2f"/>
<rect x="588" y="219.0" width="1" height="13.7" fill="#48b848"/>
<rect x="589" y="219.3" width="1" height="13.0" fill="#48b848"/>
<rect x="590" y="226.1" width="1" height="9.6" fill="#2f9f2f"/>
<rect x="591" y="224.0" width="1" height="13.1" fill="#38ab38"/>
<rect x="592" y="224.1" width="1" height="11.2" fill="#2f9f2f"/>
<rect x="593" y="226.4" width="1" height="14.0" fill="#2f9f2f"/>
<rect x="594" y="226.9" width="1" height="17.0" fill="#48b848"/>
<rect x="595" y="233.5" width="1" height="13.3" fill="#48b848"/>
<rect x="596" y="232.4" width="1" height="18.7" fill="#48b848"/>
<rect x="597" y="244.4" width="1" height="13.5" fill="#2a962a"/>
<rect x="598" y="254.8" width="1" height="16.8" fill="#48b848"/>
<rect x="599" y="265.1" width="1" height="15.9" fill="#2f9f2f"/>
<rect x="600" y="268.6" width="1" height="14.3" fill="#2f9f2f"/>
<rect x="601" y="269.7" width="1" height="23.0" fill="#48b848"/>
<rect x="602" y="263.3" width="1" height="51.4" fill="#48b848"/>
<rect x="603" y="286.1" width="1" height="21.7" fill="#2f9f2f"/>
<rect x="604" y="275.6" width="1" height="19.2" fill="#2f9f2f"/>
<rect x="605" y="265.7" width="1" height="24.0" fill="#2f9f2f"/>
<rect x="606" y="268.6" width="1" height="22.5" fill="#2f9f2f"/>
<rect x="607" y="275.6" width="1" height="12.4" fill="#2a962a"/>
<rect x="608" y="269.1" width="1" height="11.0" fill="#48b848"/>
<rect x="609" y="265.4" width="1" height="11.7" fill="#2f9f2f"/>
<rect x="610" y="269.7" width="1" height="9.8" fill="#48b848"/>
<rect x="611" y="278.4" width="1" height="14.0" fill="#48b848"/>
<rect x="612" y="278.5" width="1" height="29.3" fill="#2f9f2f"/>
<rect x="613" y="269.0" width="1" height="23.0" fill="#48b848"/>
<rect x="614" y="279.3" width="1" height="11.2" fill="#2a962a"/>
<rect x="615" y="275.1" width="1" height="12.6" fill="#38ab38"/>
<rect x="616" y="278.4" width="1" height="14.9" fill="#38ab38"/>
<rect x="617" y="273.1" width="1" height="17.2" fill="#38ab38"/>
<rect x="618" y="270.4" width="1" height="16.2" fill="#2f9f2f"/>
<rect x="619" y="265.7" width="1" height="14.1" fill="#2a962a"/>
<rect x="620" y="252.6" width="1" height="15.9" fill="#2a962a"/>
<rect x="621" y="244.4" width="1" height="19.3" fill="#2f9f2f"/>
<rect x="622" y="250.2" width="1" height="14.4" fill="#38ab38"/>
<rect x="623" y="250.6" width="1" height="14.3" fill="#2f9f2f"/>
<rect x="624" y="260.6" width="1" height="14.1" fill="#48b848"/>
<rect x="625" y="258.1" width="1" height="19.8" fill="#38ab38"/>
<rect x="626" y="271.0" width="1" height="13.4" fill="#38ab38"/>
<rect x="627" y="274.5" width="1" height="14.9" fill="#2a962a"/>
<rect x="628" y="264.6" width="1" height="16.1" fill="#2a962a"/>
<rect x="629" y="252.8" width="1" height="17.1" fill="#48b848"/>
<rect x="630" y="249.6" width="1" height="12.9" fill="#48b848"/>
<rect x="631" y="252.2" width="1" height="11.8" fill="#38ab38"/>
<rect x="632" y="258.8" width="1" height="10.7" fill="#38ab38"/>
<rect x="633" y="256.5" width="1" height="9.9" fill="#38ab38"/>
<rect x="634" y="258.6" width="1" height="8.6" fill="#38ab38"/>
<rect x="635" y="261.0" width="1" height="8.9" fill="#2f9f2f"/>
<rect x="636" y="262.5" width="1" height="6.2" fill="#2f9f2f"/>
<rect x="637" y="259.2" width="1" height="6.3" fill="#38ab38"/>
<rect x="638" y="261.0" width="1" height="5.6" fill="#2a962a"/>
<rect x="639" y="256.4" width="1" height="9.9" fill="#2f9f2f"/>
<rect x="640" y="257.2" width="1" height="10.6" fill="#38ab38"/>
<rect x="641" y="252.0" width="1" height="14.5" fill="#2f9f2f"/>
</g>
<path d="M623 104h7l-3.500 4z" fill="#8a9097"/>
<path d="M679 123.5h4" stroke="#c8c8c8"/>
<path d="M679 153.5h4" stroke="#c8c8c8"/>
<path d="M679 184.5h4" stroke="#c8c8c8"/>
<path d="M679 214.5h4" stroke="#c8c8c8"/>
<path d="M679 244.5h4" stroke="#c8c8c8"/>
<path d="M679 274.5h4" stroke="#c8c8c8"/>
<path d="M679 304.5h4" stroke="#c8c8c8"/>
<path d="M679 334.5h4" stroke="#c8c8c8"/>
<path d="M421.5 347v3" stroke="#c8c8c8"/>
<path d="M478.5 347v3" stroke="#c8c8c8"/>
<path d="M536.5 347v3" stroke="#c8c8c8"/>
<path d="M593.5 347v3" stroke="#c8c8c8"/>
<circle cx="573.700" cy="271.600" r="1.800" fill="#ff3030" shape-rendering="auto"/>
<g shape-rendering="auto"><circle cx="364" cy="111.500" r="3.800" fill="none" stroke="#d8d8d8" stroke-width="0.900"/><path d="M362.0 110.500h1M365.0 110.500h1" stroke="#d8d8d8"/><path d="M362.0 112.500q2 2 4 0" stroke="#d8d8d8" fill="none" stroke-width="0.800"/></g>
<g shape-rendering="auto"><circle cx="672" cy="111.500" r="3.800" fill="none" stroke="#d8d8d8" stroke-width="0.900"/><path d="M670.0 110.500h1M673.0 110.500h1" stroke="#d8d8d8"/><path d="M670.0 112.500q2 2 4 0" stroke="#d8d8d8" fill="none" stroke-width="0.800"/></g>
<path d="M115 109h6l-3 3.500z" fill="#fff"/><path d="M424 109h6l-3 3.500z" fill="#fff"/>
</svg>
<div class="t pl" style="letter-spacing:-0.708px;left:123.5px;top:107px;">USDJPY,M1</div>
<div class="t pl" style="letter-spacing:-0.147px;left:166.5px;top:107px;">112.675</div>
<div class="t pl" style="letter-spacing:-0.147px;left:196.3px;top:107px;">112.677</div>
<div class="t pl" style="letter-spacing:-0.147px;left:225.8px;top:107px;">112.657</div>
<div class="t pl" style="letter-spacing:-0.147px;left:255.9px;top:107px;">112.672</div>
<div class="t pl" style="letter-spacing:-0.294px;left:306.3px;top:107px;">ver.V23243457</div>
<div class="t pl" style="letter-spacing:-0.708px;left:431.5px;top:107px;">USDJPY,M5</div>
<div class="t pl" style="letter-spacing:-0.147px;left:475px;top:107px;">112.684</div>
<div class="t pl" style="letter-spacing:-0.147px;left:504.8px;top:107px;">112.697</div>
<div class="t pl" style="letter-spacing:-0.147px;left:534px;top:107px;">112.657</div>
<div class="t pl" style="letter-spacing:-0.147px;left:563.9px;top:107px;">112.672</div>
<div class="t pl" style="letter-spacing:-0.337px;left:616px;top:107px;">ver.F23243457</div>
<div class="t pl" style="letter-spacing:-0.118px;left:375.2px;top:128.7px;">112.710</div>
<div class="t pl" style="letter-spacing:-0.118px;left:375.2px;top:162.7px;">112.685</div>
<div class="t pl" style="letter-spacing:-0.118px;left:375.2px;top:195.7px;">112.660</div>
<div class="t pl" style="letter-spacing:-0.118px;left:375.2px;top:229.7px;">112.635</div>
<div class="t pl" style="letter-spacing:-0.118px;left:375.2px;top:262.7px;">112.610</div>
<div class="t pl" style="letter-spacing:-0.118px;left:375.2px;top:296.7px;">112.585</div>
<div class="t pl" style="letter-spacing:-0.118px;left:375.2px;top:329.7px;">112.560</div>
<div class="t pl" style="letter-spacing:-0.190px;left:683.4px;top:119.7px;">112.900</div>
<div class="t pl" style="letter-spacing:-0.190px;left:683.4px;top:149.7px;">112.850</div>
<div class="t pl" style="letter-spacing:-0.190px;left:683.4px;top:180.7px;">112.800</div>
<div class="t pl" style="letter-spacing:-0.190px;left:683.4px;top:210.7px;">112.750</div>
<div class="t pl" style="letter-spacing:-0.190px;left:683.4px;top:240.7px;">112.700</div>
<div class="t pl" style="letter-spacing:-0.190px;left:683.4px;top:270.7px;">112.650</div>
<div class="t pl" style="letter-spacing:-0.190px;left:683.4px;top:300.7px;">112.600</div>
<div class="t pl" style="letter-spacing:-0.190px;left:683.4px;top:330.7px;">112.550</div>
<div class="a" style="left:372px;top:179px;width:34px;height:9px;background:#fff"></div>
<div class="t pl" style="letter-spacing:-0.118px;left:375.2px;top:179.5px;color:#000;">112.672</div>
<div class="a" style="left:681px;top:257px;width:34px;height:9px;background:#fff"></div>
<div class="t pl" style="letter-spacing:-0.190px;left:683.4px;top:257.5px;color:#000;">112.672</div>
<div class="t pl" style="letter-spacing:-0.214px;left:117px;top:198px;color:#e8e8e8;">#30548096 sell 0.10</div>
<div class="t pl" style="letter-spacing:-0.266px;left:427px;top:264px;color:#e8e8e8;">#30548096 sell 0.10</div>
<div class="t pl" style="letter-spacing:-0.292px;left:113px;top:351px;">7 Dec 2018</div>
<div class="t pl" style="letter-spacing:0.169px;left:170px;top:351px;">7 Dec 21:55</div>
<div class="t pl" style="letter-spacing:0.078px;left:227.5px;top:351px;">7 Dec 22:43</div>
<div class="t pl" style="letter-spacing:0.033px;left:284px;top:351px;">7 Dec 23:31</div>
<div class="t pl" style="letter-spacing:-0.292px;left:421.5px;top:351px;">7 Dec 2018</div>
<div class="t pl" style="letter-spacing:0.169px;left:478.5px;top:351px;">7 Dec 12:35</div>
<div class="t pl" style="letter-spacing:0.169px;left:536px;top:351px;">7 Dec 16:35</div>
<div class="t pl" style="letter-spacing:0.169px;left:593px;top:351px;">7 Dec 20:35</div>
<!-- chart tabs -->
<div class="a" style="left:107px;top:368px;width:68px;height:16px;background:#fff;border:1px solid #444;border-top:0;box-sizing:border-box;border-radius:0 0 2px 2px"></div>
<div class="t" style="letter-spacing:-0.455px;left:116.800px;top:372px;font-size:9.500px;color:#111">USDJPY,M1</div>
<div class="t" style="letter-spacing:-0.455px;left:183.900px;top:372px;font-size:9.500px;color:#999">USDJPY,M5</div>
<div class="sep" style="left:241px;top:370px;height:12px;background:#999"></div>
<svg class="a" style="left:690px;top:368px" width="32" height="16" viewBox="0 0 32 16"><path d="M10.800 5.200v4.800l-2.900-2.400zM22.500 5.200v4.800l2.900-2.400z" fill="#b4b4b4"/></svg>
<div class="a" style="left:105px;top:367.500px;width:308px;height:1px;background:#6f7886"></div>
<div class="a" style="left:414px;top:367.500px;width:308px;height:1px;background:#b4b8c0"></div>
<!-- terminal row -->
<div class="a" style="left:6px;top:385px;width:716px;height:1px;background:#d9d9d9"></div>
<div class="t" style="left:8.500px;top:386.300px;font-size:10px;font-weight:bold;color:#222">×</div>
<div class="a" style="left:10px;top:397px;width:2px;height:6px;background:repeating-linear-gradient(#bbb 0 1px,#f0f0f0 1px 2px)"></div>
<div class="a" style="left:18px;top:387px;width:702px;height:15.700px;background:#fff;border-top:1px solid #b5b5b5;border-left:1px solid #d5d5d5;box-sizing:border-box"></div>
<div class="a" style="left:21.700px;top:393.300px;width:5px;height:5px;border-radius:50%;background:#b0b0b0;border:1px solid #8a8a8a;box-sizing:border-box"></div>
<div class="t tm" style="transform:scaleX(0.9704);transform-origin:0 0;left:31.700px;">残高:</div>
<div class="t tm" style="letter-spacing:-0.071px;left:56.900px;">1 135 237 JPY</div>
<div class="t tm" style="transform:scaleX(0.9569);transform-origin:0 0;left:123.800px;">損益計:</div>
<div class="t tm" style="letter-spacing:-0.004px;left:158.300px;">-648</div>
<div class="t tm" style="transform:scaleX(0.9573);transform-origin:0 0;left:183.500px;">有効証拠金:</div>
<div class="t tm" style="letter-spacing:0.015px;left:235.300px;">1 134 589</div>
<div class="t tm" style="transform:scaleX(0.9473);transform-origin:0 0;left:285px;">必要証拠金:</div>
<div class="t tm" style="letter-spacing:-0.156px;left:336.200px;">1 269</div>
<div class="t tm" style="transform:scaleX(0.9473);transform-origin:0 0;left:366.100px;">余剰証拠金:</div>
<div class="t tm" style="letter-spacing:0.037px;left:417.700px;">1 133 320</div>
<div class="t tm" style="transform:scaleX(0.9608);transform-origin:0 0;left:466.500px;">証拠金維持率:</div>
<div class="t tm" style="letter-spacing:0.114px;left:527.100px;">89408.00%</div>
<!-- status bar -->
<div class="a" style="left:6px;top:406px;width:716px;height:1px;background:#c4c4c4"></div>
<div class="t st" style="transform:scaleX(0.7812);transform-origin:0 0;left:7.800px;">F1キーでヘルプが表示されます</div>
<div class="t st" style="letter-spacing:0.413px;left:155px;">Default</div>
<div class="sep" style="left:148px;top:408px;height:15px"></div>
<div class="sep" style="left:251px;top:408px;height:15px"></div>
<div class="sep" style="left:341px;top:408px;height:15px"></div>
<div class="sep" style="left:403px;top:408px;height:15px"></div>
<div class="sep" style="left:465px;top:408px;height:15px"></div>
<div class="sep" style="left:525px;top:408px;height:15px"></div>
<div class="sep" style="left:587px;top:408px;height:15px"></div>
<div class="sep" style="left:645px;top:408px;height:15px"></div>
<svg class="a" style="left:648px;top:410px" width="22" height="11" viewBox="0 0 22 11"><rect x="0.70" y="1" width="1.45" height="7.20" fill="#74942a"/><rect x="0.70" y="8.20" width="1.45" height="1.80" fill="#1c4a7a"/><rect x="2.62" y="1" width="1.45" height="6.45" fill="#74942a"/><rect x="2.62" y="7.45" width="1.45" height="2.55" fill="#1c4a7a"/><rect x="4.54" y="1" width="1.45" height="5.70" fill="#74942a"/><rect x="4.54" y="6.70" width="1.45" height="3.30" fill="#1c4a7a"/><rect x="6.46" y="1" width="1.45" height="4.95" fill="#74942a"/><rect x="6.46" y="5.95" width="1.45" height="4.05" fill="#1c4a7a"/><rect x="8.38" y="1" width="1.45" height="4.20" fill="#74942a"/><rect x="8.38" y="5.20" width="1.45" height="4.80" fill="#1c4a7a"/><rect x="10.30" y="1" width="1.45" height="3.45" fill="#74942a"/><rect x="10.30" y="4.45" width="1.45" height="5.55" fill="#1c4a7a"/><rect x="12.22" y="1" width="1.45" height="2.70" fill="#74942a"/><rect x="12.22" y="3.70" width="1.45" height="6.30" fill="#1c4a7a"/><rect x="14.14" y="1" width="1.45" height="1.95" fill="#74942a"/><rect x="14.14" y="2.95" width="1.45" height="7.05" fill="#1c4a7a"/><rect x="16.06" y="1" width="1.45" height="1.20" fill="#74942a"/><rect x="16.06" y="2.20" width="1.45" height="7.80" fill="#1c4a7a"/><rect x="17.98" y="1" width="1.45" height="0.45" fill="#74942a"/><rect x="17.98" y="1.45" width="1.45" height="8.55" fill="#1c4a7a"/></svg>
<div class="t st" style="letter-spacing:0.002px;left:671px;">1780592</div>
<!-- resize grip -->
<div class="a" style="left:711px;top:413px;width:10px;height:10px;background:repeating-linear-gradient(135deg,transparent 0 2px,#c4c4c4 2px 3px);clip-path:polygon(100% 0,100% 100%,0 100%)"></div>
<!-- touch keyboard overlay -->
<div class="a" style="left:265.500px;top:0;width:121.300px;height:53.600px;background:rgba(62,66,68,0.60)"></div>
<div class="a" style="left:281px;top:19px;width:30px;height:2px;background:#fff"></div>
<div class="a" style="left:281px;top:33px;width:30px;height:2px;background:#fff"></div>
<div class="a" style="left:326px;top:6px;width:1px;height:34px;background:rgba(255,255,255,0.16)"></div>
<svg class="a" style="left:336px;top:15px" width="40" height="24" viewBox="0 0 40 24">
<rect x="3.500" y="3.500" width="33" height="18" rx="2.500" fill="none" stroke="#fff" stroke-width="2"/>
<g fill="#fff"><rect x="7.40" y="7.2" width="2.700" height="2.500"/><rect x="11.85" y="7.2" width="2.700" height="2.500"/><rect x="16.30" y="7.2" width="2.700" height="2.500"/><rect x="20.75" y="7.2" width="2.700" height="2.500"/><rect x="25.20" y="7.2" width="2.700" height="2.500"/><rect x="29.65" y="7.2" width="2.700" height="2.500"/><rect x="7.40" y="11.2" width="2.700" height="2.500"/><rect x="11.85" y="11.2" width="2.700" height="2.500"/><rect x="16.30" y="11.2" width="2.700" height="2.500"/><rect x="20.75" y="11.2" width="2.700" height="2.500"/><rect x="25.20" y="11.2" width="2.700" height="2.500"/><rect x="29.65" y="11.2" width="2.700" height="2.500"/><rect x="7.40" y="15.2" width="2.700" height="2.500"/><rect x="11.85" y="15.2" width="16.05" height="2.500"/><rect x="29.65" y="15.2" width="2.700" height="2.500"/></g>
</svg>
<!-- red highlight rectangle -->
<div class="a" style="left:247.500px;top:27px;width:67px;height:37.500px;border:4.500px solid #f00014;box-sizing:border-box"></div>
</body>
</html>
